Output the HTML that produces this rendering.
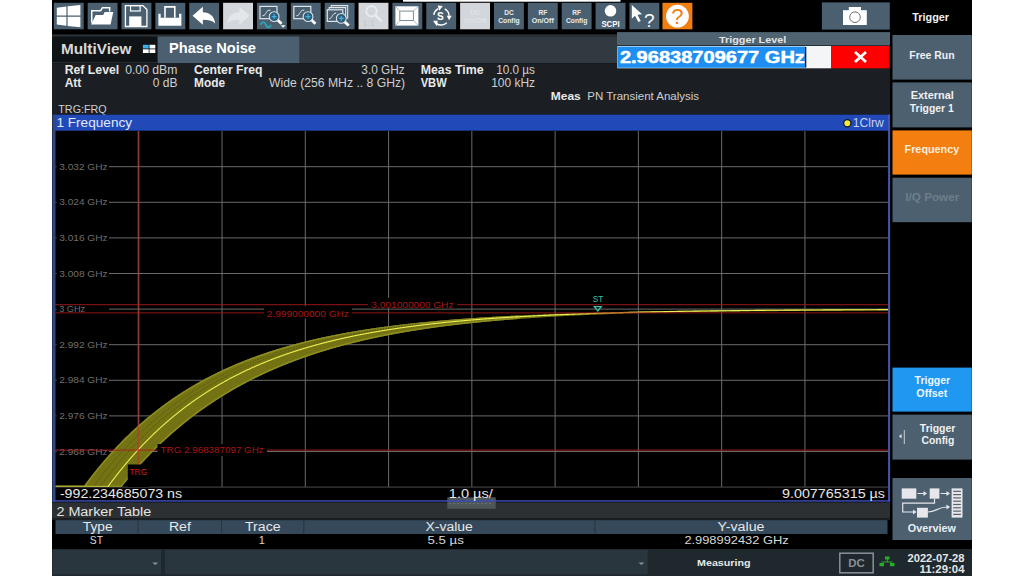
<!DOCTYPE html>
<html><head><meta charset="utf-8"><style>
html,body{margin:0;padding:0;width:1024px;height:576px;overflow:hidden;background:#fff}
svg{display:block;font-family:"Liberation Sans",sans-serif}
</style></head><body>
<svg width="1024" height="576" viewBox="0 0 1024 576">
<rect x="0.00" y="0.00" width="1024.00" height="576.00" fill="#ffffff" />
<rect x="52.00" y="0.00" width="920.00" height="576.00" fill="#000000" />
<rect x="403.00" y="0.00" width="217.50" height="1.70" fill="#ffffff" />
<rect x="53.80" y="2.80" width="29.90" height="26.50" fill="#4a5f70" />
<rect x="87.66" y="2.80" width="29.90" height="26.50" fill="#4a5f70" />
<rect x="121.52" y="2.80" width="29.90" height="26.50" fill="#4a5f70" />
<rect x="155.38" y="2.80" width="29.90" height="26.50" fill="#4a5f70" />
<rect x="189.24" y="2.80" width="29.90" height="26.50" fill="#4a5f70" />
<rect x="223.10" y="2.80" width="29.90" height="26.50" fill="#d3d6db" />
<rect x="256.96" y="2.80" width="29.90" height="26.50" fill="#4a5f70" />
<rect x="290.82" y="2.80" width="29.90" height="26.50" fill="#4a5f70" />
<rect x="324.68" y="2.80" width="29.90" height="26.50" fill="#4a5f70" />
<rect x="358.54" y="2.80" width="29.90" height="26.50" fill="#d3d6db" />
<rect x="392.40" y="2.80" width="29.90" height="26.50" fill="#4a5f70" />
<rect x="426.26" y="2.80" width="29.90" height="26.50" fill="#4a5f70" />
<rect x="460.12" y="2.80" width="29.90" height="26.50" fill="#d3d6db" />
<rect x="493.98" y="2.80" width="29.90" height="26.50" fill="#4a5f70" />
<rect x="527.84" y="2.80" width="29.90" height="26.50" fill="#4a5f70" />
<rect x="561.70" y="2.80" width="29.90" height="26.50" fill="#4a5f70" />
<rect x="595.56" y="2.80" width="29.90" height="26.50" fill="#4a5f70" />
<rect x="629.42" y="2.80" width="29.90" height="26.50" fill="#4a5f70" />
<rect x="662.48" y="2.80" width="29.90" height="26.50" fill="#f07f10" />
<rect x="821.90" y="2.40" width="67.90" height="27.20" fill="#4a5f70" />
<g transform="translate(53.80,2.8)" fill="#ffffff"><polygon points="3,4.9 12.6,3.7 12.6,12.8 3,12.8"/><polygon points="13.8,3.5 26.6,2.3 26.6,12.8 13.8,12.8"/><polygon points="3,13.9 12.6,13.9 12.6,23 3,21.8"/><polygon points="13.8,13.9 26.6,13.9 26.6,24.4 13.8,23.2"/></g>
<g transform="translate(87.66,2.8)"><polyline points="4.1,20 4.1,7.9 13,7.9 14.8,4.9 22,4.9 22,8.6" fill="none" stroke="#fff" stroke-width="1.5"/><polygon points="3.4,21.6 8,12.3 15.5,12.3 17,9.2 25.6,9.2 22.9,21.6" fill="#fff"/></g>
<g transform="translate(121.52,2.8)"><path d="M3.9,2.8 H21.3 L25.4,6.8 V23.7 H3.9 Z" fill="none" stroke="#fff" stroke-width="1.3"/><rect x="9" y="2.8" width="9.6" height="5.4" fill="none" stroke="#fff" stroke-width="1.2"/><rect x="7.7" y="13.6" width="12.2" height="9.6" fill="#fff"/></g>
<g transform="translate(155.38,2.8)"><polygon points="3,11 5.3,11 5.3,15 23.7,15 23.7,11 26,11 26,22.9 3,22.9" fill="#fff"/><polyline points="9.6,15 9.6,4.1 19.4,4.1 19.4,15" fill="none" stroke="#fff" stroke-width="1.6"/></g>
<g transform="translate(189.24,2.8)"><path d="M3.3,13 L13.6,4 V9.4 C20.5,9.4 25.2,13.5 25.9,20.6 C23,17.6 19,16.9 13.6,16.9 V21.9 Z" fill="#fff"/></g>
<g transform="translate(223.10,2.8)"><path d="M26.6,13 L16.3,4 V9.4 C9.4,9.4 4.7,13.5 4,20.6 C6.9,17.6 10.9,16.9 16.3,16.9 V21.9 Z" fill="#e3e6ea"/></g>
<g transform="translate(256.96,2.8)"><rect x="3" y="3.6" width="17" height="12.3" fill="none" stroke="#dfe6ea" stroke-width="1.2"/><path d="M5.5,13 C8,13 8.5,11 9.5,9.5 C10.5,8 11,7.3 13.5,7.3" fill="none" stroke="#dfe6ea" stroke-width="1"/><line x1="20.2" y1="16.8" x2="24.6" y2="21.0" stroke="#fff" stroke-width="2.8"/><circle cx="17.2" cy="13.8" r="4.9" fill="#2f5c78" stroke="#d8e4ea" stroke-width="1.1"/><path d="M14.7,13.8 H19.7 M17.2,11.3 V16.3" stroke="#3fb2e0" stroke-width="1.2"/><path d="M3.5,22 C5.5,18.5 7.5,18.5 9,22 C10.5,25.5 12.5,25.5 14,22" fill="none" stroke="#2aa7b0" stroke-width="1.8"/><polygon points="23.8,22.5 28.6,22.5 26.2,25" fill="#fff"/></g>
<g transform="translate(290.82,2.8)"><rect x="3" y="3.6" width="17" height="12.3" fill="none" stroke="#dfe6ea" stroke-width="1.2"/><path d="M5.5,13 C8,13 8.5,11 9.5,9.5 C10.5,8 11,7.3 13.5,7.3" fill="none" stroke="#dfe6ea" stroke-width="1"/><line x1="20.2" y1="16.8" x2="24.6" y2="21.0" stroke="#fff" stroke-width="2.8"/><circle cx="17.2" cy="13.8" r="4.9" fill="#2f5c78" stroke="#d8e4ea" stroke-width="1.1"/><path d="M14.7,13.8 H19.7 M17.2,11.3 V16.3" stroke="#3fb2e0" stroke-width="1.2"/></g>
<g transform="translate(324.68,2.8)"><path d="M6.5,5 V2.8 H23 V16" fill="none" stroke="#dfe6ea" stroke-width="1.1"/><path d="M4.5,7 V4.8 H21 V16" fill="none" stroke="#dfe6ea" stroke-width="1.1"/><rect x="2.6" y="7" width="15.5" height="11.6" fill="none" stroke="#dfe6ea" stroke-width="1.2"/><path d="M4.5,16 C6.5,16 7,14 8,12.5 C9,11 9.5,10.3 11.5,10.3" fill="none" stroke="#dfe6ea" stroke-width="1"/><line x1="19.6" y1="18.6" x2="24.0" y2="22.8" stroke="#fff" stroke-width="2.8"/><circle cx="16.6" cy="15.6" r="4.9" fill="#2f5c78" stroke="#d8e4ea" stroke-width="1.1"/><path d="M14.100000000000001,15.6 H19.1 M16.6,13.1 V18.1" stroke="#3fb2e0" stroke-width="1.2"/></g>
<g transform="translate(358.54,2.8)" fill="none" stroke="#e8ebef"><circle cx="13" cy="8.4" r="5.2" stroke-width="1.8"/><line x1="17" y1="12.6" x2="23.2" y2="18.6" stroke-width="2.6"/><text x="4.3" y="23" font-size="8.5" fill="#c2c6cb" stroke="none">1:1</text></g>
<g transform="translate(392.40,2.8)"><rect x="3" y="3.5" width="23" height="19.3" fill="#fff"/><rect x="7.4" y="8.3" width="13.6" height="9.4" fill="#fff" stroke="#7f8a92" stroke-width="1"/><path d="M3.5,4 L7.4,8.3 M25.5,4 L21,8.3 M3.5,22.3 L7.4,17.7 M25.5,22.3 L21,17.7" stroke="#a0a8ae" stroke-width="0.8"/></g>
<g transform="translate(426.26,2.8)" fill="none" stroke="#fff" stroke-width="1.5"><path d="M7.5,12 A8,8 0 0 1 12,6"/><path d="M18.5,6 A8,8 0 0 1 22.8,13"/><path d="M20.5,20 A8,8 0 0 1 10,20.5"/><polygon points="11.4,2.8 16.6,3.2 13,8" fill="#fff" stroke="none"/><polygon points="20.5,13 25.5,13 22.8,17.5" fill="#fff" stroke="none"/><polygon points="6.8,18 11.5,18 10.5,23.5" fill="#fff" stroke="none"/><text x="14" y="17.2" font-size="10" font-weight="bold" fill="#fff" stroke="none" text-anchor="middle">S</text></g>
<text x="475.07" y="14.80" font-size="6.6" fill="#e0e3e7" font-weight="bold" text-anchor="middle" >DC</text>
<text x="475.07" y="22.90" font-size="7.2" fill="#e0e3e7" font-weight="bold" text-anchor="middle" textLength="22.0" lengthAdjust="spacingAndGlyphs" >On/Off</text>
<text x="508.93" y="14.80" font-size="6.6" fill="#e8ecef" font-weight="bold" text-anchor="middle" >DC</text>
<text x="508.93" y="22.90" font-size="7.2" fill="#e8ecef" font-weight="bold" text-anchor="middle" textLength="21.5" lengthAdjust="spacingAndGlyphs" >Config</text>
<text x="542.79" y="14.80" font-size="6.6" fill="#e8ecef" font-weight="bold" text-anchor="middle" >RF</text>
<text x="542.79" y="22.90" font-size="7.2" fill="#e8ecef" font-weight="bold" text-anchor="middle" textLength="22.0" lengthAdjust="spacingAndGlyphs" >On/Off</text>
<text x="576.65" y="14.80" font-size="6.6" fill="#e8ecef" font-weight="bold" text-anchor="middle" >RF</text>
<text x="576.65" y="22.90" font-size="7.2" fill="#e8ecef" font-weight="bold" text-anchor="middle" textLength="21.5" lengthAdjust="spacingAndGlyphs" >Config</text>
<circle cx="610.51" cy="10.8" r="5.8" fill="#fff"/>
<text x="610.51" y="27.00" font-size="8.6" fill="#fff" font-weight="bold" text-anchor="middle" textLength="18.2" lengthAdjust="spacingAndGlyphs" >SCPI</text>
<g transform="translate(629.42,2.8)"><path d="M2.4,2.2 L2.4,16 L5.6,13 L8.9,19.3 L11.3,18.1 L8.1,11.9 L12.6,11.5 Z" fill="#fff"/><text x="20" y="24.6" font-size="19" fill="#fff" text-anchor="middle">?</text></g>
<circle cx="677.43" cy="16.2" r="11.4" fill="#fff"/>
<text x="677.43" y="24.20" font-size="22" fill="#f07f10" text-anchor="middle" >?</text>
<g transform="translate(843,7)"><rect x="0" y="3.2" width="23.8" height="14.8" fill="#fff"/><rect x="5.8" y="0" width="12.2" height="4" fill="#fff"/><circle cx="12" cy="10.2" r="5.3" fill="none" stroke="#6b6f72" stroke-width="1"/></g>
<rect x="52.00" y="34.40" width="838.00" height="1.90" fill="#2c3134" />
<rect x="52.00" y="36.30" width="838.00" height="27.00" fill="#313a40" />
<rect x="52.00" y="36.70" width="105.20" height="25.60" fill="#0f1316" />
<rect x="158.00" y="36.50" width="141.20" height="26.90" fill="#4b5f70" />
<text x="61.00" y="53.60" font-size="14" fill="#d9d9d9" font-weight="bold" textLength="70.3" lengthAdjust="spacingAndGlyphs" >MultiView</text>
<g fill="#fff"><rect x="142.9" y="44.8" width="5.8" height="3.7" fill="#3ab0e8"/><rect x="149.5" y="44.8" width="5.8" height="3.7"/><rect x="142.9" y="49.3" width="5.8" height="3.7"/><rect x="149.5" y="49.3" width="5.8" height="3.7"/></g>
<text x="169.00" y="53.40" font-size="14" fill="#ffffff" font-weight="bold" textLength="87.0" lengthAdjust="spacingAndGlyphs" >Phase Noise</text>
<rect x="52.00" y="63.20" width="838.00" height="51.40" fill="#1b1f23" />
<text x="64.70" y="74.30" font-size="12" fill="#e8e8e8" font-weight="bold" textLength="54.5" lengthAdjust="spacingAndGlyphs" >Ref Level</text>
<text x="177.40" y="74.30" font-size="12" fill="#cfcfcf" text-anchor="end" textLength="52.2" lengthAdjust="spacingAndGlyphs" >0.00 dBm</text>
<text x="64.70" y="86.60" font-size="12" fill="#e8e8e8" font-weight="bold" >Att</text>
<text x="177.40" y="86.60" font-size="12" fill="#cfcfcf" text-anchor="end" >0 dB</text>
<text x="194.00" y="74.30" font-size="12" fill="#e8e8e8" font-weight="bold" textLength="68.5" lengthAdjust="spacingAndGlyphs" >Center Freq</text>
<text x="404.70" y="74.30" font-size="12" fill="#cfcfcf" text-anchor="end" textLength="43.4" lengthAdjust="spacingAndGlyphs" >3.0 GHz</text>
<text x="194.00" y="86.60" font-size="12" fill="#e8e8e8" font-weight="bold" textLength="31.0" lengthAdjust="spacingAndGlyphs" >Mode</text>
<text x="405.10" y="86.60" font-size="12" fill="#cfcfcf" text-anchor="end" textLength="136.0" lengthAdjust="spacingAndGlyphs" >Wide (256 MHz .. 8 GHz)</text>
<text x="420.70" y="74.30" font-size="12" fill="#e8e8e8" font-weight="bold" textLength="62.9" lengthAdjust="spacingAndGlyphs" >Meas Time</text>
<text x="535.00" y="74.30" font-size="12" fill="#cfcfcf" text-anchor="end" textLength="38.8" lengthAdjust="spacingAndGlyphs" >10.0 µs</text>
<text x="420.70" y="86.60" font-size="12" fill="#e8e8e8" font-weight="bold" textLength="26.0" lengthAdjust="spacingAndGlyphs" >VBW</text>
<text x="535.00" y="86.60" font-size="12" fill="#cfcfcf" text-anchor="end" textLength="43.8" lengthAdjust="spacingAndGlyphs" >100 kHz</text>
<text x="550.80" y="99.60" font-size="11" fill="#e8e8e8" font-weight="bold" textLength="30.0" lengthAdjust="spacingAndGlyphs" >Meas</text>
<text x="587.30" y="99.60" font-size="11" fill="#cfcfcf" textLength="111.8" lengthAdjust="spacingAndGlyphs" >PN Transient Analysis</text>
<text x="58.30" y="113.10" font-size="11" fill="#cfcfcf" textLength="48.4" lengthAdjust="spacingAndGlyphs" >TRG:FRQ</text>
<rect x="617.00" y="32.10" width="273.00" height="13.30" fill="#4f6371" />
<text x="752.60" y="42.70" font-size="9.6" fill="#e4e4e4" font-weight="bold" text-anchor="middle" textLength="67.2" lengthAdjust="spacingAndGlyphs" >Trigger Level</text>
<rect x="617.00" y="45.40" width="273.00" height="23.30" fill="#1b1f23" />
<rect x="617.40" y="46.00" width="214.00" height="22.30" fill="#f3f5f7" />
<rect x="618.00" y="46.60" width="187.40" height="21.20" fill="#1e8ff0" />
<text x="619.90" y="63.40" font-size="16.3" fill="#ffffff" font-weight="bold" textLength="185.0" lengthAdjust="spacingAndGlyphs" stroke="#fff" stroke-width="0.45">2.96838709677 GHz</text>
<rect x="831.00" y="46.00" width="58.50" height="22.30" fill="#ff0000" />
<path d="M855,52 L866,62 M866,52 L855,62" stroke="#fff" stroke-width="2.8"/>
<rect x="805.00" y="47.00" width="1.30" height="20.50" fill="#10141a" />
<rect x="53.50" y="114.60" width="836.50" height="16.10" fill="#2149b7" />
<text x="56.40" y="127.30" font-size="12" fill="#e2e9fb" textLength="75.7" lengthAdjust="spacingAndGlyphs" >1 Frequency</text>
<circle cx="847.3" cy="123.3" r="3.6" fill="#f0f030" stroke="#10103a" stroke-width="1.2"/>
<text x="852.80" y="127.20" font-size="12" fill="#c3d3f0" textLength="31.0" lengthAdjust="spacingAndGlyphs" >1Clrw</text>
<rect x="52.30" y="114.60" width="3.20" height="387.00" fill="#33477f" />
<rect x="888.10" y="114.60" width="2.00" height="387.00" fill="#4558b0" />
<rect x="52.30" y="500.20" width="837.80" height="1.50" fill="#3a4cb4" />
<line x1="138.77" y1="131.1" x2="138.77" y2="487.1" stroke="#6a6a6a" stroke-width="1"/>
<line x1="222.04" y1="131.1" x2="222.04" y2="487.1" stroke="#6a6a6a" stroke-width="1"/>
<line x1="305.31" y1="131.1" x2="305.31" y2="487.1" stroke="#6a6a6a" stroke-width="1"/>
<line x1="388.58" y1="131.1" x2="388.58" y2="487.1" stroke="#6a6a6a" stroke-width="1"/>
<line x1="471.85" y1="131.1" x2="471.85" y2="487.1" stroke="#6a6a6a" stroke-width="1"/>
<line x1="555.12" y1="131.1" x2="555.12" y2="487.1" stroke="#6a6a6a" stroke-width="1"/>
<line x1="638.39" y1="131.1" x2="638.39" y2="487.1" stroke="#6a6a6a" stroke-width="1"/>
<line x1="721.66" y1="131.1" x2="721.66" y2="487.1" stroke="#6a6a6a" stroke-width="1"/>
<line x1="804.93" y1="131.1" x2="804.93" y2="487.1" stroke="#6a6a6a" stroke-width="1"/>
<line x1="55.5" y1="166.70" x2="888.2" y2="166.70" stroke="#6a6a6a" stroke-width="1"/>
<line x1="55.5" y1="202.30" x2="888.2" y2="202.30" stroke="#6a6a6a" stroke-width="1"/>
<line x1="55.5" y1="237.90" x2="888.2" y2="237.90" stroke="#6a6a6a" stroke-width="1"/>
<line x1="55.5" y1="273.50" x2="888.2" y2="273.50" stroke="#6a6a6a" stroke-width="1"/>
<line x1="55.5" y1="309.10" x2="888.2" y2="309.10" stroke="#6a6a6a" stroke-width="1"/>
<line x1="55.5" y1="344.70" x2="888.2" y2="344.70" stroke="#6a6a6a" stroke-width="1"/>
<line x1="55.5" y1="380.30" x2="888.2" y2="380.30" stroke="#6a6a6a" stroke-width="1"/>
<line x1="55.5" y1="415.90" x2="888.2" y2="415.90" stroke="#6a6a6a" stroke-width="1"/>
<line x1="55.5" y1="451.50" x2="888.2" y2="451.50" stroke="#6a6a6a" stroke-width="1"/>
<line x1="55.5" y1="487.10" x2="888.2" y2="487.10" stroke="#4a4a4a" stroke-width="1"/>
<rect x="56.50" y="161.70" width="52.50" height="10.00" fill="#000" />
<rect x="56.50" y="197.30" width="52.50" height="10.00" fill="#000" />
<rect x="56.50" y="232.90" width="52.50" height="10.00" fill="#000" />
<rect x="56.50" y="268.50" width="52.50" height="10.00" fill="#000" />
<rect x="56.50" y="304.10" width="52.50" height="10.00" fill="#000" />
<rect x="56.50" y="339.70" width="52.50" height="10.00" fill="#000" />
<rect x="56.50" y="375.30" width="52.50" height="10.00" fill="#000" />
<rect x="56.50" y="410.90" width="52.50" height="10.00" fill="#000" />
<rect x="56.50" y="446.50" width="52.50" height="10.00" fill="#000" />
<text x="59.20" y="169.80" font-size="9" fill="#6e6e6e" textLength="48.4" lengthAdjust="spacingAndGlyphs" >3.032 GHz</text>
<text x="59.20" y="205.40" font-size="9" fill="#6e6e6e" textLength="48.4" lengthAdjust="spacingAndGlyphs" >3.024 GHz</text>
<text x="59.20" y="241.00" font-size="9" fill="#6e6e6e" textLength="48.4" lengthAdjust="spacingAndGlyphs" >3.016 GHz</text>
<text x="59.20" y="276.60" font-size="9" fill="#6e6e6e" textLength="48.4" lengthAdjust="spacingAndGlyphs" >3.008 GHz</text>
<text x="59.20" y="312.20" font-size="9" fill="#6e6e6e" textLength="26.0" lengthAdjust="spacingAndGlyphs" >3 GHz</text>
<text x="59.20" y="347.80" font-size="9" fill="#6e6e6e" textLength="48.4" lengthAdjust="spacingAndGlyphs" >2.992 GHz</text>
<text x="59.20" y="383.40" font-size="9" fill="#6e6e6e" textLength="48.4" lengthAdjust="spacingAndGlyphs" >2.984 GHz</text>
<text x="59.20" y="419.00" font-size="9" fill="#6e6e6e" textLength="48.4" lengthAdjust="spacingAndGlyphs" >2.976 GHz</text>
<text x="59.20" y="454.60" font-size="9" fill="#6e6e6e" textLength="48.4" lengthAdjust="spacingAndGlyphs" >2.968 GHz</text>
<defs><clipPath id="gc"><rect x="55.5" y="131.1" width="832.7" height="356"/></clipPath></defs>
<g clip-path="url(#gc)">
<polygon points="55.5,487.10 56.0,487.10 56.5,487.10 57.0,487.10 57.5,487.10 58.0,487.10 58.5,487.10 59.0,487.10 59.5,487.10 60.0,487.10 60.5,487.10 61.0,487.10 61.5,487.10 62.0,487.10 62.5,487.10 63.0,487.10 63.5,487.10 64.0,487.10 64.5,487.10 65.0,487.10 65.5,487.10 66.0,487.10 66.5,487.10 67.0,487.10 67.5,487.10 68.0,487.10 68.5,487.10 69.0,487.10 69.5,487.10 70.0,487.10 70.5,487.10 71.0,487.10 71.5,487.10 72.0,487.10 72.5,487.10 73.0,487.10 73.5,487.10 74.0,487.10 74.5,487.10 75.0,487.10 75.5,487.10 76.0,487.10 76.5,487.10 77.0,487.10 77.5,487.10 78.0,487.10 78.5,487.10 79.0,487.10 79.5,487.10 80.0,487.10 80.5,487.10 81.0,487.10 81.5,487.10 82.0,487.10 82.5,487.10 83.0,487.10 83.5,486.93 84.0,486.24 84.5,485.56 85.0,484.89 85.5,484.21 86.0,483.54 86.5,482.87 87.0,482.20 87.5,481.54 88.0,480.88 88.5,480.22 89.0,479.56 89.5,478.91 90.0,478.26 90.5,477.61 91.0,476.96 91.5,476.32 92.0,475.68 92.5,475.04 93.0,474.40 93.5,473.77 94.0,473.14 94.5,472.51 95.0,471.88 95.5,471.25 96.0,470.63 96.5,470.01 97.0,469.40 97.5,468.78 98.0,468.17 98.5,467.56 99.0,466.95 99.5,466.34 100.0,465.74 100.5,465.14 101.0,464.54 101.5,463.95 102.0,463.35 102.5,462.76 103.0,462.17 103.5,461.58 104.0,461.00 104.5,460.42 105.0,459.83 105.5,459.26 106.0,458.68 106.5,458.11 107.0,457.53 107.5,456.97 108.0,456.40 108.5,455.83 109.0,455.27 109.5,454.71 110.0,454.15 110.5,453.59 111.0,453.04 111.5,452.49 112.0,451.94 112.5,451.39 113.0,450.84 113.5,450.30 114.0,449.76 114.5,449.22 115.0,448.68 115.5,448.15 116.0,447.61 116.5,447.08 117.0,446.55 117.5,446.03 118.0,445.50 118.5,444.98 119.0,444.46 119.5,443.94 120.0,443.42 120.5,442.90 121.0,442.39 121.5,441.88 122.0,441.37 122.5,440.86 123.0,440.36 123.5,439.85 124.0,439.35 124.5,438.85 125.0,438.35 125.5,437.86 126.0,437.37 126.5,436.87 127.0,436.38 127.5,435.89 128.0,435.41 128.5,434.92 129.0,434.44 129.5,433.96 130.0,433.48 130.5,433.00 131.0,432.53 131.5,432.06 132.0,431.58 132.5,431.11 133.0,430.65 133.5,430.18 134.0,429.72 134.5,429.25 135.0,428.79 135.5,428.33 136.0,427.88 136.5,427.42 137.0,426.97 137.5,426.51 138.0,426.06 138.5,425.62 139.0,425.17 139.5,424.72 140.0,424.28 140.5,423.84 141.0,423.40 141.5,422.96 142.0,422.52 142.5,422.09 143.0,421.65 143.5,421.22 144.0,420.79 144.5,420.36 145.0,419.94 145.5,419.51 146.0,419.09 146.5,418.67 147.0,418.25 147.5,417.83 148.0,417.41 148.5,417.00 149.0,416.58 149.5,416.17 150.0,415.76 150.5,415.35 151.0,414.94 151.5,414.54 152.0,414.13 152.5,413.73 153.0,413.33 153.5,412.93 154.0,412.53 154.5,412.13 155.0,411.74 155.5,411.35 156.0,410.95 156.5,410.56 157.0,410.17 157.5,409.79 158.0,409.40 158.5,409.02 159.0,408.63 159.5,408.25 160.0,407.87 160.5,407.49 161.0,407.11 161.5,406.74 162.0,406.36 162.5,405.99 163.0,405.62 163.5,405.25 164.0,404.88 164.5,404.51 165.0,404.15 165.5,403.78 166.0,403.42 166.5,403.06 167.0,402.70 167.5,402.34 168.0,401.98 168.5,401.62 169.0,401.27 169.5,400.92 170.0,400.56 170.5,400.21 171.0,399.86 171.5,399.52 172.0,399.17 172.5,398.82 173.0,398.48 173.5,398.14 174.0,397.80 174.5,397.46 175.0,397.12 175.5,396.78 176.0,396.44 176.5,396.11 177.0,395.77 177.5,395.44 178.0,395.11 178.5,394.78 179.0,394.45 179.5,394.13 180.0,393.80 180.5,393.48 181.0,393.15 181.5,392.83 182.0,392.51 182.5,392.19 183.0,391.87 183.5,391.55 184.0,391.24 184.5,390.92 185.0,390.61 185.5,390.30 186.0,389.98 186.5,389.67 187.0,389.37 187.5,389.06 188.0,388.75 188.5,388.45 189.0,388.14 189.5,387.84 190.0,387.54 190.5,387.24 191.0,386.94 191.5,386.64 192.0,386.34 192.5,386.04 193.0,385.75 193.5,385.46 194.0,385.16 194.5,384.87 195.0,384.58 195.5,384.29 196.0,384.00 196.5,383.72 197.0,383.43 197.5,383.14 198.0,382.86 198.5,382.58 199.0,382.30 199.5,382.02 200.0,381.74 200.5,381.46 201.0,381.18 201.5,380.90 202.0,380.63 202.5,380.35 203.0,380.08 203.5,379.81 204.0,379.54 204.5,379.27 205.0,379.00 205.5,378.73 206.0,378.46 206.5,378.20 207.0,377.93 207.5,377.67 208.0,377.41 208.5,377.15 209.0,376.88 209.5,376.62 210.0,376.37 210.5,376.11 211.0,375.85 211.5,375.60 212.0,375.34 212.5,375.09 213.0,374.83 213.5,374.58 214.0,374.33 214.5,374.08 215.0,373.83 215.5,373.58 216.0,373.34 216.5,373.09 217.0,372.84 217.5,372.60 218.0,372.36 218.5,372.11 219.0,371.87 219.5,371.63 220.0,371.39 220.5,371.15 221.0,370.92 221.5,370.68 222.0,370.44 222.5,370.21 223.0,369.97 223.5,369.74 224.0,369.51 224.5,369.28 225.0,369.05 225.5,368.82 226.0,368.59 226.5,368.36 227.0,368.13 227.5,367.91 228.0,367.68 228.5,367.46 229.0,367.23 229.5,367.01 230.0,366.79 230.5,366.57 231.0,366.35 231.5,366.13 232.0,365.91 232.5,365.69 233.0,365.47 233.5,365.26 234.0,365.04 234.5,364.83 235.0,364.62 235.5,364.40 236.0,364.19 236.5,363.98 237.0,363.77 237.5,363.56 238.0,363.35 238.5,363.14 239.0,362.94 239.5,362.73 240.0,362.52 240.5,362.32 241.0,362.12 241.5,361.91 242.0,361.71 242.5,361.51 243.0,361.31 243.5,361.11 244.0,360.91 244.5,360.71 245.0,360.51 245.5,360.32 246.0,360.12 246.5,359.92 247.0,359.73 247.5,359.54 248.0,359.34 248.5,359.15 249.0,358.96 249.5,358.77 250.0,358.58 250.5,358.39 251.0,358.20 251.5,358.01 252.0,357.82 252.5,357.64 253.0,357.45 253.5,357.26 254.0,357.08 254.5,356.90 255.0,356.71 255.5,356.53 256.0,356.35 256.5,356.17 257.0,355.99 257.5,355.81 258.0,355.63 258.5,355.45 259.0,355.27 259.5,355.10 260.0,354.92 260.5,354.75 261.0,354.57 261.5,354.40 262.0,354.22 262.5,354.05 263.0,353.88 263.5,353.71 264.0,353.54 264.5,353.37 265.0,353.20 265.5,353.03 266.0,352.86 266.5,352.69 267.0,352.52 267.5,352.36 268.0,352.19 268.5,352.03 269.0,351.86 269.5,351.70 270.0,351.54 270.5,351.37 271.0,351.21 271.5,351.05 272.0,350.89 272.5,350.73 273.0,350.57 273.5,350.41 274.0,350.25 274.5,350.10 275.0,349.94 275.5,349.78 276.0,349.63 276.5,349.47 277.0,349.32 277.5,349.16 278.0,349.01 278.5,348.86 279.0,348.70 279.5,348.55 280.0,348.40 280.5,348.25 281.0,348.10 281.5,347.95 282.0,347.80 282.5,347.65 283.0,347.51 283.5,347.36 284.0,347.21 284.5,347.07 285.0,346.92 285.5,346.78 286.0,346.63 286.5,346.49 287.0,346.35 287.5,346.20 288.0,346.06 288.5,345.92 289.0,345.78 289.5,345.64 290.0,345.50 290.5,345.36 291.0,345.22 291.5,345.08 292.0,344.94 292.5,344.81 293.0,344.67 293.5,344.53 294.0,344.40 294.5,344.26 295.0,344.13 295.5,343.99 296.0,343.86 296.5,343.73 297.0,343.60 297.5,343.46 298.0,343.33 298.5,343.20 299.0,343.07 299.5,342.94 300.0,342.81 300.5,342.68 301.0,342.55 301.5,342.43 302.0,342.30 302.5,342.17 303.0,342.04 303.5,341.92 304.0,341.79 304.5,341.67 305.0,341.54 305.5,341.42 306.0,341.30 306.5,341.17 307.0,341.05 307.5,340.93 308.0,340.81 308.5,340.68 309.0,340.56 309.5,340.44 310.0,340.32 310.5,340.20 311.0,340.08 311.5,339.97 312.0,339.85 312.5,339.73 313.0,339.61 313.5,339.50 314.0,339.38 314.5,339.26 315.0,339.15 315.5,339.03 316.0,338.92 316.5,338.80 317.0,338.69 317.5,338.58 318.0,338.47 318.5,338.35 319.0,338.24 319.5,338.13 320.0,338.02 320.5,337.91 321.0,337.80 321.5,337.69 322.0,337.58 322.5,337.47 323.0,337.36 323.5,337.25 324.0,337.15 324.5,337.04 325.0,336.93 325.5,336.82 326.0,336.72 326.5,336.61 327.0,336.51 327.5,336.40 328.0,336.30 328.5,336.19 329.0,336.09 329.5,335.99 330.0,335.88 330.5,335.78 331.0,335.68 331.5,335.58 332.0,335.48 332.5,335.38 333.0,335.28 333.5,335.18 334.0,335.08 334.5,334.98 335.0,334.88 335.5,334.78 336.0,334.68 336.5,334.58 337.0,334.49 337.5,334.39 338.0,334.29 338.5,334.20 339.0,334.10 339.5,334.00 340.0,333.91 340.5,333.81 341.0,333.72 341.5,333.63 342.0,333.53 342.5,333.44 343.0,333.35 343.5,333.25 344.0,333.16 344.5,333.07 345.0,332.98 345.5,332.89 346.0,332.79 346.5,332.70 347.0,332.61 347.5,332.52 348.0,332.43 348.5,332.35 349.0,332.26 349.5,332.17 350.0,332.08 350.5,331.99 351.0,331.90 351.5,331.82 352.0,331.73 352.5,331.64 353.0,331.56 353.5,331.47 354.0,331.39 354.5,331.30 355.0,331.22 355.5,331.13 356.0,331.05 356.5,330.96 357.0,330.88 357.5,330.80 358.0,330.71 358.5,330.63 359.0,330.55 359.5,330.47 360.0,330.39 360.5,330.30 361.0,330.22 361.5,330.14 362.0,330.06 362.5,329.98 363.0,329.90 363.5,329.82 364.0,329.74 364.5,329.66 365.0,329.59 365.5,329.51 366.0,329.43 366.5,329.35 367.0,329.27 367.5,329.20 368.0,329.12 368.5,329.04 369.0,328.97 369.5,328.89 370.0,328.82 370.5,328.74 371.0,328.67 371.5,328.59 372.0,328.52 372.5,328.44 373.0,328.37 373.5,328.30 374.0,328.22 374.5,328.15 375.0,328.08 375.5,328.00 376.0,327.93 376.5,327.86 377.0,327.79 377.5,327.72 378.0,327.65 378.5,327.58 379.0,327.50 379.5,327.43 380.0,327.36 380.5,327.29 381.0,327.23 381.5,327.16 382.0,327.09 382.5,327.02 383.0,326.95 383.5,326.88 384.0,326.81 384.5,326.75 385.0,326.68 385.5,326.61 386.0,326.55 386.5,326.48 387.0,326.41 387.5,326.35 388.0,326.28 388.5,326.21 389.0,326.15 389.5,326.08 390.0,326.02 390.5,325.96 391.0,325.89 391.5,325.83 392.0,325.76 392.5,325.70 393.0,325.64 393.5,325.57 394.0,325.51 394.5,325.45 395.0,325.39 395.5,325.32 396.0,325.26 396.5,325.20 397.0,325.14 397.5,325.08 398.0,325.02 398.5,324.96 399.0,324.89 399.5,324.83 400.0,324.77 400.5,324.71 401.0,324.66 401.5,324.60 402.0,324.54 402.5,324.48 403.0,324.42 403.5,324.36 404.0,324.30 404.5,324.24 405.0,324.19 405.5,324.13 406.0,324.07 406.5,324.01 407.0,323.96 407.5,323.90 408.0,323.84 408.5,323.79 409.0,323.73 409.5,323.68 410.0,323.62 410.5,323.57 411.0,323.51 411.5,323.46 412.0,323.40 412.5,323.35 413.0,323.29 413.5,323.24 414.0,323.18 414.5,323.13 415.0,323.08 415.5,323.02 416.0,322.97 416.5,322.92 417.0,322.87 417.5,322.81 418.0,322.76 418.5,322.71 419.0,322.66 419.5,322.60 420.0,322.55 420.5,322.50 421.0,322.45 421.5,322.40 422.0,322.35 422.5,322.30 423.0,322.25 423.5,322.20 424.0,322.15 424.5,322.10 425.0,322.05 425.5,322.00 426.0,321.95 426.5,321.90 427.0,321.85 427.5,321.80 428.0,321.76 428.5,321.71 429.0,321.66 429.5,321.61 430.0,321.56 430.5,321.52 431.0,321.47 431.5,321.42 432.0,321.38 432.5,321.33 433.0,321.28 433.5,321.24 434.0,321.19 434.5,321.14 435.0,321.10 435.5,321.05 436.0,321.01 436.5,320.96 437.0,320.92 437.5,320.87 438.0,320.83 438.5,320.78 439.0,320.74 439.5,320.69 440.0,320.65 440.5,320.61 441.0,320.56 441.5,320.52 442.0,320.47 442.5,320.43 443.0,320.39 443.5,320.35 444.0,320.30 444.5,320.26 445.0,320.22 445.5,320.18 446.0,320.13 446.5,320.09 447.0,320.05 447.5,320.01 448.0,319.97 448.5,319.92 449.0,319.88 449.5,319.84 450.0,319.80 450.5,319.76 451.0,319.72 451.5,319.68 452.0,319.64 452.5,319.60 453.0,319.56 453.5,319.52 454.0,319.48 454.5,319.44 455.0,319.40 455.5,319.36 456.0,319.32 456.5,319.28 457.0,319.25 457.5,319.21 458.0,319.17 458.5,319.13 459.0,319.09 459.5,319.05 460.0,319.02 460.5,318.98 461.0,318.94 461.5,318.90 462.0,318.87 462.5,318.83 463.0,318.79 463.5,318.76 464.0,318.72 464.5,318.68 465.0,318.65 465.5,318.61 466.0,318.57 466.5,318.54 467.0,318.50 467.5,318.47 468.0,318.43 468.5,318.40 469.0,318.36 469.5,318.32 470.0,318.29 470.5,318.26 471.0,318.22 471.5,318.19 472.0,318.15 472.5,318.12 473.0,318.08 473.5,318.05 474.0,318.01 474.5,317.98 475.0,317.95 475.5,317.91 476.0,317.88 476.5,317.85 477.0,317.81 477.5,317.78 478.0,317.75 478.5,317.71 479.0,317.68 479.5,317.65 480.0,317.62 480.5,317.58 481.0,317.55 481.5,317.52 482.0,317.49 482.5,317.46 483.0,317.42 483.5,317.39 484.0,317.36 484.5,317.33 485.0,317.30 485.5,317.27 486.0,317.24 486.5,317.21 487.0,317.18 487.5,317.15 488.0,317.11 488.5,317.08 489.0,317.05 489.5,317.02 490.0,316.99 490.5,316.96 491.0,316.93 491.5,316.90 492.0,316.87 492.5,316.85 493.0,316.82 493.5,316.79 494.0,316.76 494.5,316.73 495.0,316.70 495.5,316.67 496.0,316.64 496.5,316.61 497.0,316.59 497.5,316.56 498.0,316.53 498.5,316.50 499.0,316.47 499.5,316.44 500.0,316.42 500.5,316.39 501.0,316.36 501.5,316.33 502.0,316.31 502.5,316.28 503.0,316.25 503.5,316.22 504.0,316.20 504.5,316.17 505.0,316.14 505.5,316.12 506.0,316.09 506.5,316.06 507.0,316.04 507.5,316.01 508.0,315.99 508.5,315.96 509.0,315.93 509.5,315.91 510.0,315.88 510.5,315.86 511.0,315.83 511.5,315.81 512.0,315.78 512.5,315.76 513.0,315.73 513.5,315.70 514.0,315.68 514.5,315.66 515.0,315.63 515.5,315.61 516.0,315.58 516.5,315.56 517.0,315.53 517.5,315.51 518.0,315.48 518.5,315.46 519.0,315.44 519.5,315.41 520.0,315.39 520.5,315.36 521.0,315.34 521.5,315.32 522.0,315.29 522.5,315.27 523.0,315.25 523.5,315.22 524.0,315.20 524.5,315.18 525.0,315.15 525.5,315.13 526.0,315.11 526.5,315.09 527.0,315.06 527.5,315.04 528.0,315.02 528.5,315.00 529.0,314.97 529.5,314.95 530.0,314.93 530.5,314.91 531.0,314.89 531.5,314.86 532.0,314.84 532.5,314.82 533.0,314.80 533.5,314.78 534.0,314.76 534.5,314.73 535.0,314.71 535.5,314.69 536.0,314.67 536.5,314.65 537.0,314.63 537.5,314.61 538.0,314.59 538.5,314.57 539.0,314.55 539.5,314.53 540.0,314.51 540.5,314.48 541.0,314.46 541.5,314.44 542.0,314.42 542.5,314.40 543.0,314.38 543.5,314.36 544.0,314.34 544.5,314.32 545.0,314.31 545.5,314.29 546.0,314.27 546.5,314.25 547.0,314.23 547.5,314.21 548.0,314.19 548.5,314.17 549.0,314.15 549.5,314.13 550.0,314.11 550.5,314.09 551.0,314.07 551.5,314.06 552.0,314.04 552.5,314.02 553.0,314.00 553.5,313.98 554.0,313.96 554.5,313.95 555.0,313.93 555.5,313.91 556.0,313.89 556.5,313.87 557.0,313.85 557.5,313.84 558.0,313.82 558.5,313.80 559.0,313.78 559.5,313.77 560.0,313.75 560.5,313.73 561.0,313.71 561.5,313.70 562.0,313.68 562.5,313.66 563.0,313.65 563.5,313.63 564.0,313.61 564.5,313.59 565.0,313.58 565.5,313.56 566.0,313.54 566.5,313.53 567.0,313.51 567.5,313.49 568.0,313.48 568.5,313.46 569.0,313.44 569.5,313.43 570.0,313.41 570.5,313.40 571.0,313.38 571.5,313.36 572.0,313.35 572.5,313.33 573.0,313.32 573.5,313.30 574.0,313.28 574.5,313.27 575.0,313.25 575.5,313.24 576.0,313.22 576.5,313.21 577.0,313.19 577.5,313.18 578.0,313.16 578.5,313.15 579.0,313.13 579.5,313.12 580.0,313.10 580.5,313.09 581.0,313.07 581.5,313.06 582.0,313.04 582.5,313.03 583.0,313.01 583.5,313.00 584.0,312.98 584.5,312.97 585.0,312.95 585.5,312.94 586.0,312.92 586.5,312.91 587.0,312.90 587.5,312.88 588.0,312.87 588.5,312.85 589.0,312.84 589.5,312.83 590.0,312.81 590.5,312.80 591.0,312.78 591.5,312.77 592.0,312.76 592.5,312.74 593.0,312.73 593.5,312.72 594.0,312.70 594.5,312.69 595.0,312.68 595.5,312.66 596.0,312.65 596.5,312.64 597.0,312.62 597.5,312.61 598.0,312.59 598.5,312.58 599.0,312.56 599.5,312.54 600.0,312.53 600.5,312.51 601.0,312.50 601.5,312.48 602.0,312.47 602.5,312.45 603.0,312.44 603.5,312.42 604.0,312.41 604.5,312.39 605.0,312.38 605.5,312.36 606.0,312.35 606.5,312.33 607.0,312.32 607.5,312.30 608.0,312.29 608.5,312.27 609.0,312.26 609.5,312.24 610.0,312.23 610.5,312.22 611.0,312.20 611.5,312.19 612.0,312.17 612.5,312.16 613.0,312.15 613.5,312.13 614.0,312.12 614.5,312.10 615.0,312.09 615.5,312.08 616.0,312.06 616.5,312.05 617.0,312.04 617.5,312.02 618.0,312.01 618.5,311.99 619.0,311.98 619.5,311.97 620.0,311.95 620.5,311.94 621.0,311.93 621.5,311.91 622.0,311.90 622.5,311.89 623.0,311.88 623.5,311.86 624.0,311.85 624.5,311.84 625.0,311.82 625.5,311.81 626.0,311.80 626.5,311.79 627.0,311.77 627.5,311.76 628.0,311.75 628.5,311.74 629.0,311.72 629.5,311.71 630.0,311.70 630.5,311.69 631.0,311.67 631.5,311.66 632.0,311.65 632.5,311.64 633.0,311.63 633.5,311.61 634.0,311.60 634.5,311.59 635.0,311.58 635.5,311.57 636.0,311.55 636.5,311.54 637.0,311.53 637.5,311.52 638.0,311.51 638.5,311.50 639.0,311.48 639.5,311.47 640.0,311.46 640.5,311.45 641.0,311.44 641.5,311.43 642.0,311.42 642.5,311.41 643.0,311.39 643.5,311.38 644.0,311.37 644.5,311.36 645.0,311.35 645.5,311.34 646.0,311.33 646.5,311.32 647.0,311.31 647.5,311.30 648.0,311.29 648.5,311.27 649.0,311.26 649.5,311.25 650.0,311.24 650.5,311.23 651.0,311.22 651.5,311.21 652.0,311.20 652.5,311.19 653.0,311.18 653.5,311.17 654.0,311.16 654.5,311.15 655.0,311.14 655.5,311.13 656.0,311.12 656.5,311.11 657.0,311.10 657.5,311.09 658.0,311.08 658.5,311.07 659.0,311.06 659.5,311.05 660.0,311.04 660.5,311.03 661.0,311.02 661.5,311.01 662.0,311.00 662.5,310.99 663.0,310.98 663.5,310.97 664.0,310.96 664.5,310.95 665.0,310.94 665.5,310.93 666.0,310.92 666.5,310.92 667.0,310.91 667.5,310.90 668.0,310.89 668.5,310.88 669.0,310.87 669.5,310.86 670.0,310.85 670.5,310.84 671.0,310.83 671.5,310.82 672.0,310.82 672.5,310.81 673.0,310.80 673.5,310.79 674.0,310.78 674.5,310.77 675.0,310.76 675.5,310.75 676.0,310.75 676.5,310.74 677.0,310.73 677.5,310.72 678.0,310.71 678.5,310.70 679.0,310.69 679.5,310.69 680.0,310.68 680.5,310.67 681.0,310.66 681.5,310.65 682.0,310.64 682.5,310.64 683.0,310.63 683.5,310.62 684.0,310.61 684.5,310.60 685.0,310.60 685.5,310.59 686.0,310.58 686.5,310.57 687.0,310.56 687.5,310.56 688.0,310.55 688.5,310.54 689.0,310.53 689.5,310.52 690.0,310.52 690.5,310.51 691.0,310.50 691.5,310.49 692.0,310.49 692.5,310.48 693.0,310.47 693.5,310.46 694.0,310.46 694.5,310.45 695.0,310.44 695.5,310.43 696.0,310.43 696.5,310.42 697.0,310.41 697.5,310.40 698.0,310.40 698.5,310.39 699.0,310.38 699.5,310.37 700.0,310.37 700.5,310.36 701.0,310.35 701.5,310.35 702.0,310.34 702.5,310.33 703.0,310.32 703.5,310.32 704.0,310.31 704.5,310.30 705.0,310.30 705.5,310.29 706.0,310.28 706.5,310.28 707.0,310.27 707.5,310.26 708.0,310.26 708.5,310.25 709.0,310.24 709.5,310.24 710.0,310.23 710.5,310.22 711.0,310.22 711.5,310.21 712.0,310.20 712.5,310.20 713.0,310.19 713.5,310.18 714.0,310.18 714.5,310.17 715.0,310.16 715.5,310.16 716.0,310.15 716.5,310.14 717.0,310.14 717.5,310.13 718.0,310.13 718.5,310.12 719.0,310.11 719.5,310.11 720.0,310.10 720.5,310.09 721.0,310.09 721.5,310.08 722.0,310.08 722.5,310.07 723.0,310.06 723.5,310.06 724.0,310.05 724.5,310.05 725.0,310.04 725.5,310.03 726.0,310.03 726.5,310.02 727.0,310.02 727.5,310.01 728.0,310.01 728.5,310.00 729.0,309.99 729.5,309.99 730.0,309.98 730.5,309.98 731.0,309.97 731.5,309.97 732.0,309.96 732.5,309.95 733.0,309.95 733.5,309.94 734.0,309.94 734.5,309.93 735.0,309.93 735.5,309.92 736.0,309.92 736.5,309.91 737.0,309.90 737.5,309.90 738.0,309.89 738.5,309.89 739.0,309.88 739.5,309.88 740.0,309.87 740.5,309.87 741.0,309.86 741.5,309.86 742.0,309.85 742.5,309.85 743.0,309.84 743.5,309.84 744.0,309.83 744.5,309.83 745.0,309.82 745.5,309.82 746.0,309.81 746.5,309.81 747.0,309.80 747.5,309.80 748.0,309.79 748.5,309.79 749.0,309.78 749.5,309.78 750.0,309.77 750.5,309.77 751.0,309.76 751.5,309.76 752.0,309.75 752.5,309.75 753.0,309.74 753.5,309.74 754.0,309.73 754.5,309.73 755.0,309.72 755.5,309.72 756.0,309.71 756.5,309.71 757.0,309.70 757.5,309.70 758.0,309.69 758.5,309.69 759.0,309.69 759.5,309.68 760.0,309.68 760.5,309.67 761.0,309.67 761.5,309.66 762.0,309.66 762.5,309.65 763.0,309.65 763.5,309.65 764.0,309.64 764.5,309.64 765.0,309.63 765.5,309.63 766.0,309.62 766.5,309.62 767.0,309.62 767.5,309.61 768.0,309.61 768.5,309.60 769.0,309.60 769.5,309.59 770.0,309.59 770.5,309.59 771.0,309.58 771.5,309.58 772.0,309.57 772.5,309.57 773.0,309.56 773.5,309.56 774.0,309.56 774.5,309.55 775.0,309.55 775.5,309.54 776.0,309.54 776.5,309.54 777.0,309.53 777.5,309.53 778.0,309.52 778.5,309.52 779.0,309.52 779.5,309.51 780.0,309.51 780.5,309.51 781.0,309.50 781.5,309.50 782.0,309.49 782.5,309.49 783.0,309.49 783.5,309.48 784.0,309.48 784.5,309.47 785.0,309.47 785.5,309.47 786.0,309.46 786.5,309.46 787.0,309.46 787.5,309.45 788.0,309.45 788.5,309.45 789.0,309.44 789.5,309.44 790.0,309.43 790.5,309.43 791.0,309.43 791.5,309.42 792.0,309.42 792.5,309.42 793.0,309.41 793.5,309.41 794.0,309.41 794.5,309.40 795.0,309.40 795.5,309.40 796.0,309.39 796.5,309.39 797.0,309.39 797.5,309.38 798.0,309.38 798.5,309.38 799.0,309.37 799.5,309.37 800.0,309.37 800.5,309.36 801.0,309.36 801.5,309.36 802.0,309.35 802.5,309.35 803.0,309.35 803.5,309.34 804.0,309.34 804.5,309.34 805.0,309.33 805.5,309.33 806.0,309.33 806.5,309.32 807.0,309.32 807.5,309.32 808.0,309.31 808.5,309.31 809.0,309.31 809.5,309.30 810.0,309.30 810.5,309.30 811.0,309.29 811.5,309.29 812.0,309.29 812.5,309.29 813.0,309.28 813.5,309.28 814.0,309.28 814.5,309.27 815.0,309.27 815.5,309.27 816.0,309.26 816.5,309.26 817.0,309.26 817.5,309.26 818.0,309.25 818.5,309.25 819.0,309.25 819.5,309.24 820.0,309.24 820.5,309.24 821.0,309.24 821.5,309.23 822.0,309.23 822.5,309.23 823.0,309.22 823.5,309.22 824.0,309.22 824.5,309.22 825.0,309.21 825.5,309.21 826.0,309.21 826.5,309.21 827.0,309.20 827.5,309.20 828.0,309.20 828.5,309.19 829.0,309.19 829.5,309.19 830.0,309.19 830.5,309.18 831.0,309.18 831.5,309.18 832.0,309.18 832.5,309.17 833.0,309.17 833.5,309.17 834.0,309.17 834.5,309.16 835.0,309.16 835.5,309.16 836.0,309.16 836.5,309.15 837.0,309.15 837.5,309.15 838.0,309.15 838.5,309.14 839.0,309.14 839.5,309.14 840.0,309.14 840.5,309.13 841.0,309.13 841.5,309.13 842.0,309.13 842.5,309.12 843.0,309.12 843.5,309.12 844.0,309.12 844.5,309.11 845.0,309.11 845.5,309.11 846.0,309.11 846.5,309.10 847.0,309.10 847.5,309.10 848.0,309.10 848.5,309.10 849.0,309.09 849.5,309.09 850.0,309.09 850.5,309.09 851.0,309.08 851.5,309.08 852.0,309.08 852.5,309.08 853.0,309.08 853.5,309.07 854.0,309.07 854.5,309.07 855.0,309.07 855.5,309.06 856.0,309.06 856.5,309.06 857.0,309.06 857.5,309.06 858.0,309.05 858.5,309.05 859.0,309.05 859.5,309.05 860.0,309.05 860.5,309.04 861.0,309.04 861.5,309.04 862.0,309.04 862.5,309.03 863.0,309.03 863.5,309.03 864.0,309.03 864.5,309.03 865.0,309.02 865.5,309.02 866.0,309.02 866.5,309.02 867.0,309.02 867.5,309.01 868.0,309.01 868.5,309.01 869.0,309.01 869.5,309.01 870.0,309.00 870.5,309.00 871.0,309.00 871.5,309.00 872.0,309.00 872.5,309.00 873.0,308.99 873.5,308.99 874.0,308.99 874.5,308.99 875.0,308.99 875.5,308.98 876.0,308.98 876.5,308.98 877.0,308.98 877.5,308.98 878.0,308.97 878.5,308.97 879.0,308.97 879.5,308.97 880.0,308.97 880.5,308.97 881.0,308.96 881.5,308.96 882.0,308.96 882.5,308.96 883.0,308.96 883.5,308.96 884.0,308.95 884.5,308.95 885.0,308.95 885.5,308.95 886.0,308.95 886.5,308.94 887.0,308.94 887.5,308.94 888.0,308.94 888.0,310.54 887.5,310.54 887.0,310.54 886.5,310.54 886.0,310.55 885.5,310.55 885.0,310.55 884.5,310.55 884.0,310.55 883.5,310.56 883.0,310.56 882.5,310.56 882.0,310.56 881.5,310.56 881.0,310.56 880.5,310.57 880.0,310.57 879.5,310.57 879.0,310.57 878.5,310.57 878.0,310.57 877.5,310.58 877.0,310.58 876.5,310.58 876.0,310.58 875.5,310.58 875.0,310.59 874.5,310.59 874.0,310.59 873.5,310.59 873.0,310.59 872.5,310.60 872.0,310.60 871.5,310.60 871.0,310.60 870.5,310.60 870.0,310.60 869.5,310.61 869.0,310.61 868.5,310.61 868.0,310.61 867.5,310.61 867.0,310.62 866.5,310.62 866.0,310.62 865.5,310.62 865.0,310.62 864.5,310.63 864.0,310.63 863.5,310.63 863.0,310.63 862.5,310.63 862.0,310.64 861.5,310.64 861.0,310.64 860.5,310.64 860.0,310.65 859.5,310.65 859.0,310.65 858.5,310.65 858.0,310.65 857.5,310.66 857.0,310.66 856.5,310.66 856.0,310.66 855.5,310.66 855.0,310.67 854.5,310.67 854.0,310.67 853.5,310.67 853.0,310.68 852.5,310.68 852.0,310.68 851.5,310.68 851.0,310.68 850.5,310.69 850.0,310.69 849.5,310.69 849.0,310.69 848.5,310.70 848.0,310.70 847.5,310.70 847.0,310.70 846.5,310.70 846.0,310.71 845.5,310.71 845.0,310.71 844.5,310.71 844.0,310.72 843.5,310.72 843.0,310.72 842.5,310.72 842.0,310.73 841.5,310.73 841.0,310.73 840.5,310.73 840.0,310.74 839.5,310.74 839.0,310.74 838.5,310.74 838.0,310.75 837.5,310.75 837.0,310.75 836.5,310.75 836.0,310.76 835.5,310.76 835.0,310.76 834.5,310.76 834.0,310.77 833.5,310.77 833.0,310.77 832.5,310.77 832.0,310.78 831.5,310.78 831.0,310.78 830.5,310.78 830.0,310.79 829.5,310.79 829.0,310.79 828.5,310.79 828.0,310.80 827.5,310.80 827.0,310.80 826.5,310.81 826.0,310.81 825.5,310.81 825.0,310.81 824.5,310.82 824.0,310.82 823.5,310.82 823.0,310.82 822.5,310.83 822.0,310.83 821.5,310.83 821.0,310.84 820.5,310.84 820.0,310.84 819.5,310.84 819.0,310.85 818.5,310.85 818.0,310.85 817.5,310.86 817.0,310.86 816.5,310.86 816.0,310.86 815.5,310.87 815.0,310.87 814.5,310.87 814.0,310.88 813.5,310.88 813.0,310.88 812.5,310.89 812.0,310.89 811.5,310.89 811.0,310.89 810.5,310.90 810.0,310.90 809.5,310.90 809.0,310.91 808.5,310.91 808.0,310.91 807.5,310.92 807.0,310.92 806.5,310.92 806.0,310.93 805.5,310.93 805.0,310.93 804.5,310.94 804.0,310.94 803.5,310.94 803.0,310.95 802.5,310.95 802.0,310.95 801.5,310.96 801.0,310.96 800.5,310.96 800.0,310.97 799.5,310.97 799.0,310.97 798.5,310.98 798.0,310.98 797.5,310.98 797.0,310.99 796.5,310.99 796.0,310.99 795.5,311.00 795.0,311.00 794.5,311.00 794.0,311.01 793.5,311.01 793.0,311.01 792.5,311.02 792.0,311.02 791.5,311.02 791.0,311.03 790.5,311.03 790.0,311.03 789.5,311.04 789.0,311.04 788.5,311.05 788.0,311.05 787.5,311.05 787.0,311.06 786.5,311.06 786.0,311.06 785.5,311.07 785.0,311.07 784.5,311.07 784.0,311.08 783.5,311.08 783.0,311.09 782.5,311.09 782.0,311.09 781.5,311.10 781.0,311.10 780.5,311.11 780.0,311.11 779.5,311.11 779.0,311.12 778.5,311.12 778.0,311.12 777.5,311.13 777.0,311.13 776.5,311.14 776.0,311.14 775.5,311.14 775.0,311.15 774.5,311.15 774.0,311.16 773.5,311.16 773.0,311.16 772.5,311.17 772.0,311.17 771.5,311.18 771.0,311.18 770.5,311.19 770.0,311.19 769.5,311.19 769.0,311.20 768.5,311.20 768.0,311.21 767.5,311.21 767.0,311.22 766.5,311.22 766.0,311.22 765.5,311.23 765.0,311.23 764.5,311.24 764.0,311.24 763.5,311.25 763.0,311.25 762.5,311.25 762.0,311.26 761.5,311.26 761.0,311.27 760.5,311.27 760.0,311.28 759.5,311.28 759.0,311.29 758.5,311.29 758.0,311.29 757.5,311.30 757.0,311.30 756.5,311.31 756.0,311.31 755.5,311.32 755.0,311.32 754.5,311.33 754.0,311.33 753.5,311.34 753.0,311.34 752.5,311.35 752.0,311.35 751.5,311.36 751.0,311.36 750.5,311.37 750.0,311.37 749.5,311.38 749.0,311.38 748.5,311.39 748.0,311.39 747.5,311.40 747.0,311.40 746.5,311.41 746.0,311.41 745.5,311.42 745.0,311.42 744.5,311.43 744.0,311.43 743.5,311.44 743.0,311.44 742.5,311.45 742.0,311.45 741.5,311.46 741.0,311.46 740.5,311.47 740.0,311.47 739.5,311.48 739.0,311.48 738.5,311.49 738.0,311.49 737.5,311.50 737.0,311.50 736.5,311.51 736.0,311.52 735.5,311.52 735.0,311.53 734.5,311.53 734.0,311.54 733.5,311.54 733.0,311.55 732.5,311.55 732.0,311.56 731.5,311.57 731.0,311.57 730.5,311.58 730.0,311.58 729.5,311.59 729.0,311.59 728.5,311.60 728.0,311.61 727.5,311.61 727.0,311.62 726.5,311.62 726.0,311.63 725.5,311.63 725.0,311.64 724.5,311.65 724.0,311.65 723.5,311.66 723.0,311.66 722.5,311.67 722.0,311.68 721.5,311.68 721.0,311.69 720.5,311.69 720.0,311.70 719.5,311.71 719.0,311.71 718.5,311.72 718.0,311.73 717.5,311.73 717.0,311.74 716.5,311.74 716.0,311.75 715.5,311.76 715.0,311.76 714.5,311.77 714.0,311.78 713.5,311.78 713.0,311.79 712.5,311.80 712.0,311.80 711.5,311.81 711.0,311.82 710.5,311.82 710.0,311.83 709.5,311.84 709.0,311.84 708.5,311.85 708.0,311.86 707.5,311.86 707.0,311.87 706.5,311.88 706.0,311.88 705.5,311.89 705.0,311.90 704.5,311.90 704.0,311.91 703.5,311.92 703.0,311.92 702.5,311.93 702.0,311.94 701.5,311.95 701.0,311.95 700.5,311.96 700.0,311.97 699.5,311.97 699.0,311.98 698.5,311.99 698.0,312.00 697.5,312.00 697.0,312.01 696.5,312.02 696.0,312.03 695.5,312.03 695.0,312.04 694.5,312.05 694.0,312.06 693.5,312.06 693.0,312.07 692.5,312.08 692.0,312.09 691.5,312.09 691.0,312.10 690.5,312.11 690.0,312.12 689.5,312.12 689.0,312.13 688.5,312.14 688.0,312.15 687.5,312.16 687.0,312.16 686.5,312.17 686.0,312.18 685.5,312.19 685.0,312.20 684.5,312.20 684.0,312.21 683.5,312.22 683.0,312.23 682.5,312.24 682.0,312.24 681.5,312.25 681.0,312.26 680.5,312.27 680.0,312.28 679.5,312.29 679.0,312.29 678.5,312.30 678.0,312.31 677.5,312.32 677.0,312.33 676.5,312.34 676.0,312.35 675.5,312.35 675.0,312.36 674.5,312.37 674.0,312.38 673.5,312.39 673.0,312.40 672.5,312.41 672.0,312.42 671.5,312.42 671.0,312.43 670.5,312.44 670.0,312.45 669.5,312.46 669.0,312.47 668.5,312.48 668.0,312.49 667.5,312.50 667.0,312.51 666.5,312.52 666.0,312.52 665.5,312.53 665.0,312.54 664.5,312.55 664.0,312.56 663.5,312.57 663.0,312.58 662.5,312.59 662.0,312.60 661.5,312.61 661.0,312.62 660.5,312.63 660.0,312.64 659.5,312.65 659.0,312.66 658.5,312.67 658.0,312.68 657.5,312.69 657.0,312.70 656.5,312.71 656.0,312.72 655.5,312.73 655.0,312.74 654.5,312.75 654.0,312.76 653.5,312.77 653.0,312.78 652.5,312.79 652.0,312.80 651.5,312.81 651.0,312.82 650.5,312.83 650.0,312.84 649.5,312.85 649.0,312.86 648.5,312.87 648.0,312.89 647.5,312.90 647.0,312.91 646.5,312.92 646.0,312.93 645.5,312.94 645.0,312.95 644.5,312.96 644.0,312.97 643.5,312.98 643.0,312.99 642.5,313.01 642.0,313.02 641.5,313.03 641.0,313.05 640.5,313.06 640.0,313.08 639.5,313.09 639.0,313.11 638.5,313.12 638.0,313.14 637.5,313.15 637.0,313.17 636.5,313.18 636.0,313.20 635.5,313.21 635.0,313.23 634.5,313.24 634.0,313.26 633.5,313.27 633.0,313.29 632.5,313.31 632.0,313.32 631.5,313.34 631.0,313.35 630.5,313.37 630.0,313.39 629.5,313.40 629.0,313.42 628.5,313.43 628.0,313.45 627.5,313.47 627.0,313.48 626.5,313.50 626.0,313.51 625.5,313.53 625.0,313.55 624.5,313.56 624.0,313.58 623.5,313.60 623.0,313.62 622.5,313.63 622.0,313.65 621.5,313.67 621.0,313.68 620.5,313.70 620.0,313.72 619.5,313.73 619.0,313.75 618.5,313.77 618.0,313.79 617.5,313.80 617.0,313.82 616.5,313.84 616.0,313.86 615.5,313.88 615.0,313.89 614.5,313.91 614.0,313.93 613.5,313.95 613.0,313.97 612.5,313.98 612.0,314.00 611.5,314.02 611.0,314.04 610.5,314.06 610.0,314.08 609.5,314.09 609.0,314.11 608.5,314.13 608.0,314.15 607.5,314.17 607.0,314.19 606.5,314.21 606.0,314.23 605.5,314.25 605.0,314.27 604.5,314.29 604.0,314.30 603.5,314.32 603.0,314.34 602.5,314.36 602.0,314.38 601.5,314.40 601.0,314.42 600.5,314.44 600.0,314.46 599.5,314.48 599.0,314.50 598.5,314.52 598.0,314.54 597.5,314.56 597.0,314.58 596.5,314.61 596.0,314.63 595.5,314.65 595.0,314.67 594.5,314.69 594.0,314.71 593.5,314.73 593.0,314.75 592.5,314.77 592.0,314.79 591.5,314.82 591.0,314.84 590.5,314.86 590.0,314.88 589.5,314.90 589.0,314.92 588.5,314.95 588.0,314.97 587.5,314.99 587.0,315.01 586.5,315.03 586.0,315.06 585.5,315.08 585.0,315.10 584.5,315.12 584.0,315.15 583.5,315.17 583.0,315.19 582.5,315.21 582.0,315.24 581.5,315.26 581.0,315.28 580.5,315.31 580.0,315.33 579.5,315.35 579.0,315.38 578.5,315.40 578.0,315.42 577.5,315.45 577.0,315.47 576.5,315.50 576.0,315.52 575.5,315.54 575.0,315.57 574.5,315.59 574.0,315.62 573.5,315.64 573.0,315.67 572.5,315.69 572.0,315.72 571.5,315.74 571.0,315.77 570.5,315.79 570.0,315.82 569.5,315.84 569.0,315.87 568.5,315.89 568.0,315.92 567.5,315.94 567.0,315.97 566.5,315.99 566.0,316.02 565.5,316.05 565.0,316.07 564.5,316.10 564.0,316.12 563.5,316.15 563.0,316.18 562.5,316.20 562.0,316.23 561.5,316.26 561.0,316.28 560.5,316.31 560.0,316.34 559.5,316.37 559.0,316.39 558.5,316.42 558.0,316.45 557.5,316.48 557.0,316.50 556.5,316.53 556.0,316.56 555.5,316.59 555.0,316.62 554.5,316.64 554.0,316.67 553.5,316.70 553.0,316.73 552.5,316.76 552.0,316.79 551.5,316.82 551.0,316.85 550.5,316.87 550.0,316.90 549.5,316.93 549.0,316.96 548.5,316.99 548.0,317.02 547.5,317.05 547.0,317.08 546.5,317.11 546.0,317.14 545.5,317.17 545.0,317.20 544.5,317.23 544.0,317.26 543.5,317.29 543.0,317.32 542.5,317.36 542.0,317.39 541.5,317.42 541.0,317.45 540.5,317.48 540.0,317.51 539.5,317.54 539.0,317.58 538.5,317.61 538.0,317.64 537.5,317.67 537.0,317.70 536.5,317.74 536.0,317.77 535.5,317.80 535.0,317.83 534.5,317.87 534.0,317.90 533.5,317.93 533.0,317.97 532.5,318.00 532.0,318.03 531.5,318.07 531.0,318.10 530.5,318.13 530.0,318.17 529.5,318.20 529.0,318.24 528.5,318.27 528.0,318.31 527.5,318.34 527.0,318.37 526.5,318.41 526.0,318.44 525.5,318.48 525.0,318.51 524.5,318.55 524.0,318.59 523.5,318.62 523.0,318.66 522.5,318.69 522.0,318.73 521.5,318.77 521.0,318.80 520.5,318.84 520.0,318.87 519.5,318.91 519.0,318.95 518.5,318.99 518.0,319.02 517.5,319.06 517.0,319.10 516.5,319.14 516.0,319.17 515.5,319.21 515.0,319.25 514.5,319.29 514.0,319.33 513.5,319.36 513.0,319.40 512.5,319.44 512.0,319.48 511.5,319.52 511.0,319.56 510.5,319.60 510.0,319.64 509.5,319.68 509.0,319.72 508.5,319.76 508.0,319.80 507.5,319.84 507.0,319.88 506.5,319.92 506.0,319.96 505.5,320.00 505.0,320.04 504.5,320.08 504.0,320.12 503.5,320.16 503.0,320.21 502.5,320.25 502.0,320.29 501.5,320.33 501.0,320.37 500.5,320.42 500.0,320.46 499.5,320.50 499.0,320.54 498.5,320.59 498.0,320.63 497.5,320.67 497.0,320.72 496.5,320.76 496.0,320.80 495.5,320.85 495.0,320.89 494.5,320.94 494.0,320.98 493.5,321.03 493.0,321.07 492.5,321.12 492.0,321.16 491.5,321.21 491.0,321.25 490.5,321.30 490.0,321.34 489.5,321.39 489.0,321.43 488.5,321.48 488.0,321.53 487.5,321.57 487.0,321.62 486.5,321.67 486.0,321.72 485.5,321.76 485.0,321.81 484.5,321.86 484.0,321.91 483.5,321.95 483.0,322.00 482.5,322.05 482.0,322.10 481.5,322.15 481.0,322.20 480.5,322.25 480.0,322.30 479.5,322.34 479.0,322.39 478.5,322.44 478.0,322.49 477.5,322.54 477.0,322.60 476.5,322.65 476.0,322.70 475.5,322.75 475.0,322.80 474.5,322.85 474.0,322.90 473.5,322.95 473.0,323.01 472.5,323.06 472.0,323.11 471.5,323.16 471.0,323.22 470.5,323.27 470.0,323.32 469.5,323.37 469.0,323.43 468.5,323.48 468.0,323.54 467.5,323.59 467.0,323.64 466.5,323.70 466.0,323.75 465.5,323.81 465.0,323.86 464.5,323.92 464.0,323.97 463.5,324.03 463.0,324.09 462.5,324.14 462.0,324.20 461.5,324.26 461.0,324.31 460.5,324.37 460.0,324.43 459.5,324.48 459.0,324.54 458.5,324.60 458.0,324.66 457.5,324.72 457.0,324.77 456.5,324.83 456.0,324.89 455.5,324.95 455.0,325.01 454.5,325.07 454.0,325.13 453.5,325.19 453.0,325.25 452.5,325.31 452.0,325.37 451.5,325.43 451.0,325.49 450.5,325.55 450.0,325.62 449.5,325.68 449.0,325.74 448.5,325.80 448.0,325.86 447.5,325.93 447.0,325.99 446.5,326.05 446.0,326.12 445.5,326.18 445.0,326.24 444.5,326.31 444.0,326.37 443.5,326.44 443.0,326.50 442.5,326.57 442.0,326.63 441.5,326.70 441.0,326.76 440.5,326.83 440.0,326.90 439.5,326.96 439.0,327.03 438.5,327.10 438.0,327.16 437.5,327.23 437.0,327.30 436.5,327.37 436.0,327.44 435.5,327.50 435.0,327.57 434.5,327.64 434.0,327.71 433.5,327.78 433.0,327.85 432.5,327.92 432.0,327.99 431.5,328.06 431.0,328.13 430.5,328.20 430.0,328.27 429.5,328.35 429.0,328.42 428.5,328.49 428.0,328.56 427.5,328.64 427.0,328.71 426.5,328.78 426.0,328.85 425.5,328.93 425.0,329.00 424.5,329.08 424.0,329.15 423.5,329.23 423.0,329.30 422.5,329.38 422.0,329.45 421.5,329.53 421.0,329.60 420.5,329.68 420.0,329.76 419.5,329.83 419.0,329.91 418.5,329.99 418.0,330.07 417.5,330.15 417.0,330.22 416.5,330.30 416.0,330.38 415.5,330.46 415.0,330.54 414.5,330.62 414.0,330.70 413.5,330.78 413.0,330.86 412.5,330.94 412.0,331.02 411.5,331.11 411.0,331.19 410.5,331.27 410.0,331.35 409.5,331.43 409.0,331.52 408.5,331.60 408.0,331.69 407.5,331.77 407.0,331.85 406.5,331.94 406.0,332.02 405.5,332.11 405.0,332.19 404.5,332.28 404.0,332.37 403.5,332.45 403.0,332.54 402.5,332.63 402.0,332.71 401.5,332.80 401.0,332.89 400.5,332.98 400.0,333.07 399.5,333.16 399.0,333.25 398.5,333.34 398.0,333.43 397.5,333.52 397.0,333.61 396.5,333.70 396.0,333.79 395.5,333.88 395.0,333.97 394.5,334.06 394.0,334.16 393.5,334.25 393.0,334.34 392.5,334.44 392.0,334.53 391.5,334.63 391.0,334.72 390.5,334.82 390.0,334.91 389.5,335.01 389.0,335.10 388.5,335.20 388.0,335.30 387.5,335.39 387.0,335.49 386.5,335.59 386.0,335.69 385.5,335.78 385.0,335.88 384.5,335.98 384.0,336.08 383.5,336.18 383.0,336.28 382.5,336.38 382.0,336.48 381.5,336.59 381.0,336.69 380.5,336.79 380.0,336.89 379.5,336.99 379.0,337.10 378.5,337.20 378.0,337.31 377.5,337.41 377.0,337.51 376.5,337.62 376.0,337.73 375.5,337.83 375.0,337.94 374.5,338.04 374.0,338.15 373.5,338.26 373.0,338.37 372.5,338.47 372.0,338.58 371.5,338.69 371.0,338.80 370.5,338.91 370.0,339.02 369.5,339.13 369.0,339.24 368.5,339.35 368.0,339.47 367.5,339.58 367.0,339.69 366.5,339.80 366.0,339.92 365.5,340.03 365.0,340.14 364.5,340.26 364.0,340.37 363.5,340.49 363.0,340.60 362.5,340.72 362.0,340.84 361.5,340.95 361.0,341.07 360.5,341.19 360.0,341.31 359.5,341.43 359.0,341.55 358.5,341.67 358.0,341.79 357.5,341.91 357.0,342.03 356.5,342.15 356.0,342.27 355.5,342.39 355.0,342.51 354.5,342.64 354.0,342.76 353.5,342.88 353.0,343.01 352.5,343.13 352.0,343.26 351.5,343.38 351.0,343.51 350.5,343.64 350.0,343.76 349.5,343.89 349.0,344.02 348.5,344.15 348.0,344.28 347.5,344.41 347.0,344.54 346.5,344.67 346.0,344.80 345.5,344.93 345.0,345.06 344.5,345.19 344.0,345.32 343.5,345.46 343.0,345.59 342.5,345.72 342.0,345.86 341.5,345.99 341.0,346.13 340.5,346.27 340.0,346.40 339.5,346.54 339.0,346.68 338.5,346.81 338.0,346.95 337.5,347.09 337.0,347.23 336.5,347.37 336.0,347.51 335.5,347.65 335.0,347.79 334.5,347.93 334.0,348.08 333.5,348.22 333.0,348.36 332.5,348.51 332.0,348.65 331.5,348.79 331.0,348.94 330.5,349.09 330.0,349.23 329.5,349.38 329.0,349.53 328.5,349.67 328.0,349.82 327.5,349.97 327.0,350.12 326.5,350.27 326.0,350.42 325.5,350.57 325.0,350.72 324.5,350.88 324.0,351.03 323.5,351.18 323.0,351.34 322.5,351.49 322.0,351.64 321.5,351.80 321.0,351.96 320.5,352.11 320.0,352.27 319.5,352.43 319.0,352.58 318.5,352.74 318.0,352.90 317.5,353.06 317.0,353.22 316.5,353.38 316.0,353.54 315.5,353.71 315.0,353.87 314.5,354.03 314.0,354.20 313.5,354.36 313.0,354.53 312.5,354.69 312.0,354.86 311.5,355.02 311.0,355.19 310.5,355.36 310.0,355.53 309.5,355.70 309.0,355.87 308.5,356.04 308.0,356.21 307.5,356.38 307.0,356.55 306.5,356.72 306.0,356.90 305.5,357.07 305.0,357.24 304.5,357.42 304.0,357.59 303.5,357.77 303.0,357.95 302.5,358.12 302.0,358.30 301.5,358.48 301.0,358.66 300.5,358.84 300.0,359.02 299.5,359.20 299.0,359.38 298.5,359.57 298.0,359.75 297.5,359.93 297.0,360.12 296.5,360.30 296.0,360.49 295.5,360.67 295.0,360.86 294.5,361.05 294.0,361.24 293.5,361.43 293.0,361.62 292.5,361.81 292.0,362.00 291.5,362.19 291.0,362.38 290.5,362.57 290.0,362.77 289.5,362.96 289.0,363.16 288.5,363.35 288.0,363.55 287.5,363.74 287.0,363.94 286.5,364.14 286.0,364.34 285.5,364.54 285.0,364.74 284.5,364.94 284.0,365.14 283.5,365.35 283.0,365.55 282.5,365.75 282.0,365.96 281.5,366.16 281.0,366.37 280.5,366.58 280.0,366.78 279.5,366.99 279.0,367.20 278.5,367.41 278.0,367.62 277.5,367.83 277.0,368.04 276.5,368.26 276.0,368.47 275.5,368.68 275.0,368.90 274.5,369.11 274.0,369.33 273.5,369.55 273.0,369.76 272.5,369.98 272.0,370.20 271.5,370.42 271.0,370.64 270.5,370.86 270.0,371.09 269.5,371.31 269.0,371.53 268.5,371.76 268.0,371.98 267.5,372.21 267.0,372.44 266.5,372.66 266.0,372.89 265.5,373.12 265.0,373.35 264.5,373.58 264.0,373.82 263.5,374.05 263.0,374.28 262.5,374.52 262.0,374.75 261.5,374.99 261.0,375.22 260.5,375.46 260.0,375.70 259.5,375.94 259.0,376.18 258.5,376.42 258.0,376.66 257.5,376.90 257.0,377.15 256.5,377.39 256.0,377.63 255.5,377.88 255.0,378.13 254.5,378.37 254.0,378.62 253.5,378.87 253.0,379.12 252.5,379.37 252.0,379.62 251.5,379.88 251.0,380.13 250.5,380.38 250.0,380.64 249.5,380.90 249.0,381.15 248.5,381.41 248.0,381.67 247.5,381.93 247.0,382.19 246.5,382.45 246.0,382.71 245.5,382.98 245.0,383.24 244.5,383.51 244.0,383.77 243.5,384.04 243.0,384.31 242.5,384.58 242.0,384.85 241.5,385.12 241.0,385.39 240.5,385.66 240.0,385.93 239.5,386.21 239.0,386.48 238.5,386.76 238.0,387.04 237.5,387.32 237.0,387.59 236.5,387.87 236.0,388.16 235.5,388.44 235.0,388.72 234.5,389.01 234.0,389.29 233.5,389.58 233.0,389.86 232.5,390.15 232.0,390.44 231.5,390.73 231.0,391.02 230.5,391.31 230.0,391.61 229.5,391.90 229.0,392.19 228.5,392.49 228.0,392.79 227.5,393.09 227.0,393.38 226.5,393.68 226.0,393.99 225.5,394.29 225.0,394.59 224.5,394.90 224.0,395.20 223.5,395.51 223.0,395.81 222.5,396.12 222.0,396.43 221.5,396.74 221.0,397.05 220.5,397.37 220.0,397.68 219.5,398.00 219.0,398.31 218.5,398.63 218.0,398.95 217.5,399.27 217.0,399.59 216.5,399.91 216.0,400.23 215.5,400.56 215.0,400.88 214.5,401.21 214.0,401.53 213.5,401.86 213.0,402.19 212.5,402.52 212.0,402.85 211.5,403.19 211.0,403.52 210.5,403.85 210.0,404.19 209.5,404.53 209.0,404.87 208.5,405.21 208.0,405.55 207.5,405.89 207.0,406.23 206.5,406.58 206.0,406.92 205.5,407.27 205.0,407.62 204.5,407.97 204.0,408.32 203.5,408.67 203.0,409.02 202.5,409.38 202.0,409.73 201.5,410.09 201.0,410.45 200.5,410.81 200.0,411.17 199.5,411.53 199.0,411.89 198.5,412.25 198.0,412.62 197.5,412.99 197.0,413.35 196.5,413.72 196.0,414.09 195.5,414.47 195.0,414.84 194.5,415.21 194.0,415.59 193.5,415.96 193.0,416.34 192.5,416.72 192.0,417.10 191.5,417.49 191.0,417.87 190.5,418.25 190.0,418.64 189.5,419.03 189.0,419.42 188.5,419.81 188.0,420.20 187.5,420.59 187.0,420.99 186.5,421.38 186.0,421.78 185.5,422.18 185.0,422.58 184.5,422.98 184.0,423.38 183.5,423.78 183.0,424.19 182.5,424.60 182.0,425.01 181.5,425.41 181.0,425.83 180.5,426.24 180.0,426.65 179.5,427.07 179.0,427.48 178.5,427.90 178.0,428.32 177.5,428.74 177.0,429.17 176.5,429.59 176.0,430.02 175.5,430.44 175.0,430.87 174.5,431.30 174.0,431.74 173.5,432.17 173.0,432.60 172.5,433.04 172.0,433.48 171.5,433.92 171.0,434.36 170.5,434.80 170.0,435.24 169.5,435.69 169.0,436.14 168.5,436.59 168.0,437.04 167.5,437.49 167.0,437.94 166.5,438.40 166.0,438.85 165.5,439.31 165.0,439.77 164.5,440.23 164.0,440.70 163.5,441.16 163.0,441.63 162.5,442.09 162.0,442.56 161.5,443.04 161.0,443.51 160.5,443.98 160.0,444.46 159.5,444.94 159.0,445.42 158.5,445.90 158.0,446.38 157.5,446.87 157.0,447.35 156.5,447.84 156.0,448.33 155.5,448.82 155.0,449.32 154.5,449.81 154.0,450.31 153.5,450.81 153.0,451.31 152.5,451.81 152.0,452.31 151.5,452.82 151.0,453.33 150.5,453.84 150.0,454.35 149.5,454.86 149.0,455.38 148.5,455.89 148.0,456.41 147.5,456.93 147.0,457.46 146.5,457.98 146.0,458.51 145.5,459.03 145.0,459.56 144.5,460.09 144.0,460.63 143.5,461.16 143.0,461.70 142.5,462.24 142.0,462.78 141.5,463.32 141.0,463.87 140.5,464.42 140.0,464.97 139.5,465.52 139.0,466.07 138.5,466.62 138.0,467.18 137.5,467.74 137.0,468.30 136.5,468.86 136.0,469.43 135.5,470.00 135.0,470.57 134.5,471.14 134.0,471.71 133.5,472.29 133.0,472.86 132.5,473.44 132.0,474.02 131.5,474.61 131.0,475.19 130.5,475.78 130.0,476.37 129.5,476.96 129.0,477.56 128.5,478.15 128.0,478.75 127.5,479.35 127.0,479.95 126.5,480.56 126.0,481.17 125.5,481.78 125.0,482.39 124.5,483.00 124.0,483.62 123.5,484.24 123.0,484.86 122.5,485.48 122.0,486.10 121.5,486.73 121.0,487.10 120.5,487.10 120.0,487.10 119.5,487.10 119.0,487.10 118.5,487.10 118.0,487.10 117.5,487.10 117.0,487.10 116.5,487.10 116.0,487.10 115.5,487.10 115.0,487.10 114.5,487.10 114.0,487.10 113.5,487.10 113.0,487.10 112.5,487.10 112.0,487.10 111.5,487.10 111.0,487.10 110.5,487.10 110.0,487.10 109.5,487.10 109.0,487.10 108.5,487.10 108.0,487.10 107.5,487.10 107.0,487.10 106.5,487.10 106.0,487.10 105.5,487.10 105.0,487.10 104.5,487.10 104.0,487.10 103.5,487.10 103.0,487.10 102.5,487.10 102.0,487.10 101.5,487.10 101.0,487.10 100.5,487.10 100.0,487.10 99.5,487.10 99.0,487.10 98.5,487.10 98.0,487.10 97.5,487.10 97.0,487.10 96.5,487.10 96.0,487.10 95.5,487.10 95.0,487.10 94.5,487.10 94.0,487.10 93.5,487.10 93.0,487.10 92.5,487.10 92.0,487.10 91.5,487.10 91.0,487.10 90.5,487.10 90.0,487.10 89.5,487.10 89.0,487.10 88.5,487.10 88.0,487.10 87.5,487.10 87.0,487.10 86.5,487.10 86.0,487.10 85.5,487.10 85.0,487.10 84.5,487.10 84.0,487.10 83.5,487.10 83.0,487.10 82.5,487.10 82.0,487.10 81.5,487.10 81.0,487.10 80.5,487.10 80.0,487.10 79.5,487.10 79.0,487.10 78.5,487.10 78.0,487.10 77.5,487.10 77.0,487.10 76.5,487.10 76.0,487.10 75.5,487.10 75.0,487.10 74.5,487.10 74.0,487.10 73.5,487.10 73.0,487.10 72.5,487.10 72.0,487.10 71.5,487.10 71.0,487.10 70.5,487.10 70.0,487.10 69.5,487.10 69.0,487.10 68.5,487.10 68.0,487.10 67.5,487.10 67.0,487.10 66.5,487.10 66.0,487.10 65.5,487.10 65.0,487.10 64.5,487.10 64.0,487.10 63.5,487.10 63.0,487.10 62.5,487.10 62.0,487.10 61.5,487.10 61.0,487.10 60.5,487.10 60.0,487.10 59.5,487.10 59.0,487.10 58.5,487.10 58.0,487.10 57.5,487.10 57.0,487.10 56.5,487.10 56.0,487.10 55.5,487.10" fill="#737314"/>
<polyline points="55.5,487.90 56.0,487.90 56.5,487.90 57.0,487.90 57.5,487.90 58.0,487.90 58.5,487.90 59.0,487.90 59.5,487.90 60.0,487.90 60.5,487.90 61.0,487.90 61.5,487.90 62.0,487.90 62.5,487.90 63.0,487.90 63.5,487.90 64.0,487.90 64.5,487.90 65.0,487.90 65.5,487.90 66.0,487.90 66.5,487.90 67.0,487.90 67.5,487.90 68.0,487.90 68.5,487.90 69.0,487.90 69.5,487.90 70.0,487.90 70.5,487.90 71.0,487.90 71.5,487.90 72.0,487.90 72.5,487.90 73.0,487.90 73.5,487.90 74.0,487.90 74.5,487.90 75.0,487.90 75.5,487.90 76.0,487.90 76.5,487.90 77.0,487.90 77.5,487.90 78.0,487.90 78.5,487.90 79.0,487.90 79.5,487.90 80.0,487.90 80.5,487.90 81.0,487.90 81.5,487.90 82.0,487.90 82.5,487.90 83.0,487.90 83.5,487.73 84.0,487.04 84.5,486.36 85.0,485.69 85.5,485.01 86.0,484.34 86.5,483.67 87.0,483.00 87.5,482.34 88.0,481.68 88.5,481.02 89.0,480.36 89.5,479.71 90.0,479.06 90.5,478.41 91.0,477.76 91.5,477.12 92.0,476.48 92.5,475.84 93.0,475.20 93.5,474.57 94.0,473.94 94.5,473.31 95.0,472.68 95.5,472.05 96.0,471.43 96.5,470.81 97.0,470.20 97.5,469.58 98.0,468.97 98.5,468.36 99.0,467.75 99.5,467.14 100.0,466.54 100.5,465.94 101.0,465.34 101.5,464.75 102.0,464.15 102.5,463.56 103.0,462.97 103.5,462.38 104.0,461.80 104.5,461.22 105.0,460.63 105.5,460.06 106.0,459.48 106.5,458.91 107.0,458.33 107.5,457.77 108.0,457.20 108.5,456.63 109.0,456.07 109.5,455.51 110.0,454.95 110.5,454.39 111.0,453.84 111.5,453.29 112.0,452.74 112.5,452.19 113.0,451.64 113.5,451.10 114.0,450.56 114.5,450.02 115.0,449.48 115.5,448.95 116.0,448.41 116.5,447.88 117.0,447.35 117.5,446.83 118.0,446.30 118.5,445.78 119.0,445.26 119.5,444.74 120.0,444.22 120.5,443.70 121.0,443.19 121.5,442.68 122.0,442.17 122.5,441.66 123.0,441.16 123.5,440.65 124.0,440.15 124.5,439.65 125.0,439.15 125.5,438.66 126.0,438.17 126.5,437.67 127.0,437.18 127.5,436.69 128.0,436.21 128.5,435.72 129.0,435.24 129.5,434.76 130.0,434.28 130.5,433.80 131.0,433.33 131.5,432.86 132.0,432.38 132.5,431.91 133.0,431.45 133.5,430.98 134.0,430.52 134.5,430.05 135.0,429.59 135.5,429.13 136.0,428.68 136.5,428.22 137.0,427.77 137.5,427.31 138.0,426.86 138.5,426.42 139.0,425.97 139.5,425.52 140.0,425.08 140.5,424.64 141.0,424.20 141.5,423.76 142.0,423.32 142.5,422.89 143.0,422.45 143.5,422.02 144.0,421.59 144.5,421.16 145.0,420.74 145.5,420.31 146.0,419.89 146.5,419.47 147.0,419.05 147.5,418.63 148.0,418.21 148.5,417.80 149.0,417.38 149.5,416.97 150.0,416.56 150.5,416.15 151.0,415.74 151.5,415.34 152.0,414.93 152.5,414.53 153.0,414.13 153.5,413.73 154.0,413.33 154.5,412.93 155.0,412.54 155.5,412.15 156.0,411.75 156.5,411.36 157.0,410.97 157.5,410.59 158.0,410.20 158.5,409.82 159.0,409.43 159.5,409.05 160.0,408.67 160.5,408.29 161.0,407.91 161.5,407.54 162.0,407.16 162.5,406.79 163.0,406.42 163.5,406.05 164.0,405.68 164.5,405.31 165.0,404.95 165.5,404.58 166.0,404.22 166.5,403.86 167.0,403.50 167.5,403.14 168.0,402.78 168.5,402.42 169.0,402.07 169.5,401.72 170.0,401.36 170.5,401.01 171.0,400.66 171.5,400.32 172.0,399.97 172.5,399.62 173.0,399.28 173.5,398.94 174.0,398.60 174.5,398.26 175.0,397.92 175.5,397.58 176.0,397.24 176.5,396.91 177.0,396.57 177.5,396.24 178.0,395.91 178.5,395.58 179.0,395.25 179.5,394.93 180.0,394.60 180.5,394.28 181.0,393.95 181.5,393.63 182.0,393.31 182.5,392.99 183.0,392.67 183.5,392.35 184.0,392.04 184.5,391.72 185.0,391.41 185.5,391.10 186.0,390.78 186.5,390.47 187.0,390.17 187.5,389.86 188.0,389.55 188.5,389.25 189.0,388.94 189.5,388.64 190.0,388.34 190.5,388.04 191.0,387.74 191.5,387.44 192.0,387.14 192.5,386.84 193.0,386.55 193.5,386.26 194.0,385.96 194.5,385.67 195.0,385.38 195.5,385.09 196.0,384.80 196.5,384.52 197.0,384.23 197.5,383.94 198.0,383.66 198.5,383.38 199.0,383.10 199.5,382.82 200.0,382.54 200.5,382.26 201.0,381.98 201.5,381.70 202.0,381.43 202.5,381.15 203.0,380.88 203.5,380.61 204.0,380.34 204.5,380.07 205.0,379.80 205.5,379.53 206.0,379.26 206.5,379.00 207.0,378.73 207.5,378.47 208.0,378.21 208.5,377.95 209.0,377.68 209.5,377.42 210.0,377.17 210.5,376.91 211.0,376.65 211.5,376.40 212.0,376.14 212.5,375.89 213.0,375.63 213.5,375.38 214.0,375.13 214.5,374.88 215.0,374.63 215.5,374.38 216.0,374.14 216.5,373.89 217.0,373.64 217.5,373.40 218.0,373.16 218.5,372.91 219.0,372.67 219.5,372.43 220.0,372.19 220.5,371.95 221.0,371.72 221.5,371.48 222.0,371.24 222.5,371.01 223.0,370.77 223.5,370.54 224.0,370.31 224.5,370.08 225.0,369.85 225.5,369.62 226.0,369.39 226.5,369.16 227.0,368.93 227.5,368.71 228.0,368.48 228.5,368.26 229.0,368.03 229.5,367.81 230.0,367.59 230.5,367.37 231.0,367.15 231.5,366.93 232.0,366.71 232.5,366.49 233.0,366.27 233.5,366.06 234.0,365.84 234.5,365.63 235.0,365.42 235.5,365.20 236.0,364.99 236.5,364.78 237.0,364.57 237.5,364.36 238.0,364.15 238.5,363.94 239.0,363.74 239.5,363.53 240.0,363.32 240.5,363.12 241.0,362.92 241.5,362.71 242.0,362.51 242.5,362.31 243.0,362.11 243.5,361.91 244.0,361.71 244.5,361.51 245.0,361.31 245.5,361.12 246.0,360.92 246.5,360.72 247.0,360.53 247.5,360.34 248.0,360.14 248.5,359.95 249.0,359.76 249.5,359.57 250.0,359.38 250.5,359.19 251.0,359.00 251.5,358.81 252.0,358.62 252.5,358.44 253.0,358.25 253.5,358.06 254.0,357.88 254.5,357.70 255.0,357.51 255.5,357.33 256.0,357.15 256.5,356.97 257.0,356.79 257.5,356.61 258.0,356.43 258.5,356.25 259.0,356.07 259.5,355.90 260.0,355.72 260.5,355.55 261.0,355.37 261.5,355.20 262.0,355.02 262.5,354.85 263.0,354.68 263.5,354.51 264.0,354.34 264.5,354.17 265.0,354.00 265.5,353.83 266.0,353.66 266.5,353.49 267.0,353.32 267.5,353.16 268.0,352.99 268.5,352.83 269.0,352.66 269.5,352.50 270.0,352.34 270.5,352.17 271.0,352.01 271.5,351.85 272.0,351.69 272.5,351.53 273.0,351.37 273.5,351.21 274.0,351.05 274.5,350.90 275.0,350.74 275.5,350.58 276.0,350.43 276.5,350.27 277.0,350.12 277.5,349.96 278.0,349.81 278.5,349.66 279.0,349.50 279.5,349.35 280.0,349.20 280.5,349.05 281.0,348.90 281.5,348.75 282.0,348.60 282.5,348.45 283.0,348.31 283.5,348.16 284.0,348.01 284.5,347.87 285.0,347.72 285.5,347.58 286.0,347.43 286.5,347.29 287.0,347.15 287.5,347.00 288.0,346.86 288.5,346.72 289.0,346.58 289.5,346.44 290.0,346.30 290.5,346.16 291.0,346.02 291.5,345.88 292.0,345.74 292.5,345.61 293.0,345.47 293.5,345.33 294.0,345.20 294.5,345.06 295.0,344.93 295.5,344.79 296.0,344.66 296.5,344.53 297.0,344.40 297.5,344.26 298.0,344.13 298.5,344.00 299.0,343.87 299.5,343.74 300.0,343.61 300.5,343.48 301.0,343.35 301.5,343.23 302.0,343.10 302.5,342.97 303.0,342.84 303.5,342.72 304.0,342.59 304.5,342.47 305.0,342.34 305.5,342.22 306.0,342.10 306.5,341.97 307.0,341.85 307.5,341.73 308.0,341.61 308.5,341.48 309.0,341.36 309.5,341.24 310.0,341.12 310.5,341.00 311.0,340.88 311.5,340.77 312.0,340.65 312.5,340.53 313.0,340.41 313.5,340.30 314.0,340.18 314.5,340.06 315.0,339.95 315.5,339.83 316.0,339.72 316.5,339.60 317.0,339.49 317.5,339.38 318.0,339.27 318.5,339.15 319.0,339.04 319.5,338.93 320.0,338.82 320.5,338.71 321.0,338.60 321.5,338.49 322.0,338.38 322.5,338.27 323.0,338.16 323.5,338.05 324.0,337.95 324.5,337.84 325.0,337.73 325.5,337.62 326.0,337.52 326.5,337.41 327.0,337.31 327.5,337.20 328.0,337.10 328.5,336.99 329.0,336.89 329.5,336.79 330.0,336.68 330.5,336.58 331.0,336.48 331.5,336.38 332.0,336.28 332.5,336.18 333.0,336.08 333.5,335.98 334.0,335.88 334.5,335.78 335.0,335.68 335.5,335.58 336.0,335.48 336.5,335.38 337.0,335.29 337.5,335.19 338.0,335.09 338.5,335.00 339.0,334.90 339.5,334.80 340.0,334.71 340.5,334.61 341.0,334.52 341.5,334.43 342.0,334.33 342.5,334.24 343.0,334.15 343.5,334.05 344.0,333.96 344.5,333.87 345.0,333.78 345.5,333.69 346.0,333.59 346.5,333.50 347.0,333.41 347.5,333.32 348.0,333.23 348.5,333.15 349.0,333.06 349.5,332.97 350.0,332.88 350.5,332.79 351.0,332.70 351.5,332.62 352.0,332.53 352.5,332.44 353.0,332.36 353.5,332.27 354.0,332.19 354.5,332.10 355.0,332.02 355.5,331.93 356.0,331.85 356.5,331.76 357.0,331.68 357.5,331.60 358.0,331.51 358.5,331.43 359.0,331.35 359.5,331.27 360.0,331.19 360.5,331.10 361.0,331.02 361.5,330.94 362.0,330.86 362.5,330.78 363.0,330.70 363.5,330.62 364.0,330.54 364.5,330.46 365.0,330.39 365.5,330.31 366.0,330.23 366.5,330.15 367.0,330.07 367.5,330.00 368.0,329.92 368.5,329.84 369.0,329.77 369.5,329.69 370.0,329.62 370.5,329.54 371.0,329.47 371.5,329.39 372.0,329.32 372.5,329.24 373.0,329.17 373.5,329.10 374.0,329.02 374.5,328.95 375.0,328.88 375.5,328.80 376.0,328.73 376.5,328.66 377.0,328.59 377.5,328.52 378.0,328.45 378.5,328.38 379.0,328.30 379.5,328.23 380.0,328.16 380.5,328.09 381.0,328.03 381.5,327.96 382.0,327.89 382.5,327.82 383.0,327.75 383.5,327.68 384.0,327.61 384.5,327.55 385.0,327.48 385.5,327.41 386.0,327.35 386.5,327.28 387.0,327.21 387.5,327.15 388.0,327.08 388.5,327.01 389.0,326.95 389.5,326.88 390.0,326.82 390.5,326.76 391.0,326.69 391.5,326.63 392.0,326.56 392.5,326.50 393.0,326.44 393.5,326.37 394.0,326.31 394.5,326.25 395.0,326.19 395.5,326.12 396.0,326.06 396.5,326.00 397.0,325.94 397.5,325.88 398.0,325.82 398.5,325.76 399.0,325.69 399.5,325.63 400.0,325.57 400.5,325.51 401.0,325.46 401.5,325.40 402.0,325.34 402.5,325.28 403.0,325.22 403.5,325.16 404.0,325.10 404.5,325.04 405.0,324.99 405.5,324.93 406.0,324.87 406.5,324.81 407.0,324.76 407.5,324.70 408.0,324.64 408.5,324.59 409.0,324.53 409.5,324.48 410.0,324.42 410.5,324.37 411.0,324.31 411.5,324.26 412.0,324.20 412.5,324.15 413.0,324.09 413.5,324.04 414.0,323.98 414.5,323.93 415.0,323.88 415.5,323.82 416.0,323.77 416.5,323.72 417.0,323.67 417.5,323.61 418.0,323.56 418.5,323.51 419.0,323.46 419.5,323.40 420.0,323.35 420.5,323.30 421.0,323.25 421.5,323.20 422.0,323.15 422.5,323.10 423.0,323.05 423.5,323.00 424.0,322.95 424.5,322.90 425.0,322.85 425.5,322.80 426.0,322.75 426.5,322.70 427.0,322.65 427.5,322.60 428.0,322.56 428.5,322.51 429.0,322.46 429.5,322.41 430.0,322.36 430.5,322.32 431.0,322.27 431.5,322.22 432.0,322.18 432.5,322.13 433.0,322.08 433.5,322.04 434.0,321.99 434.5,321.94 435.0,321.90 435.5,321.85 436.0,321.81 436.5,321.76 437.0,321.72 437.5,321.67 438.0,321.63 438.5,321.58 439.0,321.54 439.5,321.49 440.0,321.45 440.5,321.41 441.0,321.36 441.5,321.32 442.0,321.27 442.5,321.23 443.0,321.19 443.5,321.15 444.0,321.10 444.5,321.06 445.0,321.02 445.5,320.98 446.0,320.93 446.5,320.89 447.0,320.85 447.5,320.81 448.0,320.77 448.5,320.72 449.0,320.68 449.5,320.64 450.0,320.60 450.5,320.56 451.0,320.52 451.5,320.48 452.0,320.44 452.5,320.40 453.0,320.36 453.5,320.32 454.0,320.28 454.5,320.24 455.0,320.20 455.5,320.16 456.0,320.12 456.5,320.08 457.0,320.05 457.5,320.01 458.0,319.97 458.5,319.93 459.0,319.89 459.5,319.85 460.0,319.82 460.5,319.78 461.0,319.74 461.5,319.70 462.0,319.67 462.5,319.63 463.0,319.59 463.5,319.56 464.0,319.52 464.5,319.48 465.0,319.45 465.5,319.41 466.0,319.37 466.5,319.34 467.0,319.30 467.5,319.27 468.0,319.23 468.5,319.20 469.0,319.16 469.5,319.12 470.0,319.09 470.5,319.06 471.0,319.02 471.5,318.99 472.0,318.95 472.5,318.92 473.0,318.88 473.5,318.85 474.0,318.81 474.5,318.78 475.0,318.75 475.5,318.71 476.0,318.68 476.5,318.65 477.0,318.61 477.5,318.58 478.0,318.55 478.5,318.51 479.0,318.48 479.5,318.45 480.0,318.42 480.5,318.38 481.0,318.35 481.5,318.32 482.0,318.29 482.5,318.26 483.0,318.22 483.5,318.19 484.0,318.16 484.5,318.13 485.0,318.10 485.5,318.07 486.0,318.04 486.5,318.01 487.0,317.98 487.5,317.95 488.0,317.91 488.5,317.88 489.0,317.85 489.5,317.82 490.0,317.79 490.5,317.76 491.0,317.73 491.5,317.70 492.0,317.67 492.5,317.65 493.0,317.62 493.5,317.59 494.0,317.56 494.5,317.53 495.0,317.50 495.5,317.47 496.0,317.44 496.5,317.41 497.0,317.39 497.5,317.36 498.0,317.33 498.5,317.30 499.0,317.27 499.5,317.24 500.0,317.22 500.5,317.19 501.0,317.16 501.5,317.13 502.0,317.11 502.5,317.08 503.0,317.05 503.5,317.02 504.0,317.00 504.5,316.97 505.0,316.94 505.5,316.92 506.0,316.89 506.5,316.86 507.0,316.84 507.5,316.81 508.0,316.79 508.5,316.76 509.0,316.73 509.5,316.71 510.0,316.68 510.5,316.66 511.0,316.63 511.5,316.61 512.0,316.58 512.5,316.56 513.0,316.53 513.5,316.50 514.0,316.48 514.5,316.46 515.0,316.43 515.5,316.41 516.0,316.38 516.5,316.36 517.0,316.33 517.5,316.31 518.0,316.28 518.5,316.26 519.0,316.24 519.5,316.21" fill="none" stroke="#8c8c20" stroke-width="1.6"/>
<polyline points="55.5,486.30 56.0,486.30 56.5,486.30 57.0,486.30 57.5,486.30 58.0,486.30 58.5,486.30 59.0,486.30 59.5,486.30 60.0,486.30 60.5,486.30 61.0,486.30 61.5,486.30 62.0,486.30 62.5,486.30 63.0,486.30 63.5,486.30 64.0,486.30 64.5,486.30 65.0,486.30 65.5,486.30 66.0,486.30 66.5,486.30 67.0,486.30 67.5,486.30 68.0,486.30 68.5,486.30 69.0,486.30 69.5,486.30 70.0,486.30 70.5,486.30 71.0,486.30 71.5,486.30 72.0,486.30 72.5,486.30 73.0,486.30 73.5,486.30 74.0,486.30 74.5,486.30 75.0,486.30 75.5,486.30 76.0,486.30 76.5,486.30 77.0,486.30 77.5,486.30 78.0,486.30 78.5,486.30 79.0,486.30 79.5,486.30 80.0,486.30 80.5,486.30 81.0,486.30 81.5,486.30 82.0,486.30 82.5,486.30 83.0,486.30 83.5,486.30 84.0,486.30 84.5,486.30 85.0,486.30 85.5,486.30 86.0,486.30 86.5,486.30 87.0,486.30 87.5,486.30 88.0,486.30 88.5,486.30 89.0,486.30 89.5,486.30 90.0,486.30 90.5,486.30 91.0,486.30 91.5,486.30 92.0,486.30 92.5,486.30 93.0,486.30 93.5,486.30 94.0,486.30 94.5,486.30 95.0,486.30 95.5,486.30 96.0,486.30 96.5,486.30 97.0,486.30 97.5,486.30 98.0,486.30 98.5,486.30 99.0,486.30 99.5,486.30 100.0,486.30 100.5,486.30 101.0,486.30 101.5,486.30 102.0,486.30 102.5,486.30 103.0,486.30 103.5,486.30 104.0,486.30 104.5,486.30 105.0,486.30 105.5,486.30 106.0,486.30 106.5,486.30 107.0,486.30 107.5,486.30 108.0,486.30 108.5,486.30 109.0,486.30 109.5,486.30 110.0,486.30 110.5,486.30 111.0,486.30 111.5,486.30 112.0,486.30 112.5,486.30 113.0,486.30 113.5,486.30 114.0,486.30 114.5,486.30 115.0,486.30 115.5,486.30 116.0,486.30 116.5,486.30 117.0,486.30 117.5,486.30 118.0,486.30 118.5,486.30 119.0,486.30 119.5,486.30 120.0,486.30 120.5,486.30 121.0,486.30 121.5,485.93 122.0,485.30 122.5,484.68 123.0,484.06 123.5,483.44 124.0,482.82 124.5,482.20 125.0,481.59 125.5,480.98 126.0,480.37 126.5,479.76 127.0,479.15 127.5,478.55 128.0,477.95 128.5,477.35 129.0,476.76 129.5,476.16 130.0,475.57 130.5,474.98 131.0,474.39 131.5,473.81 132.0,473.22 132.5,472.64 133.0,472.06 133.5,471.49 134.0,470.91 134.5,470.34 135.0,469.77 135.5,469.20 136.0,468.63 136.5,468.06 137.0,467.50 137.5,466.94 138.0,466.38 138.5,465.82 139.0,465.27 139.5,464.72 140.0,464.17 140.5,463.62 141.0,463.07 141.5,462.52 142.0,461.98 142.5,461.44 143.0,460.90 143.5,460.36 144.0,459.83 144.5,459.29 145.0,458.76 145.5,458.23 146.0,457.71 146.5,457.18 147.0,456.66 147.5,456.13 148.0,455.61 148.5,455.09 149.0,454.58 149.5,454.06 150.0,453.55 150.5,453.04 151.0,452.53 151.5,452.02 152.0,451.51 152.5,451.01 153.0,450.51 153.5,450.01 154.0,449.51 154.5,449.01 155.0,448.52 155.5,448.02 156.0,447.53 156.5,447.04 157.0,446.55 157.5,446.07 158.0,445.58 158.5,445.10 159.0,444.62 159.5,444.14 160.0,443.66 160.5,443.18 161.0,442.71 161.5,442.24 162.0,441.76 162.5,441.29 163.0,440.83 163.5,440.36 164.0,439.90 164.5,439.43 165.0,438.97 165.5,438.51 166.0,438.05 166.5,437.60 167.0,437.14 167.5,436.69 168.0,436.24 168.5,435.79 169.0,435.34 169.5,434.89 170.0,434.44 170.5,434.00 171.0,433.56 171.5,433.12 172.0,432.68 172.5,432.24 173.0,431.80 173.5,431.37 174.0,430.94 174.5,430.50 175.0,430.07 175.5,429.64 176.0,429.22 176.5,428.79 177.0,428.37 177.5,427.94 178.0,427.52 178.5,427.10 179.0,426.68 179.5,426.27 180.0,425.85 180.5,425.44 181.0,425.03 181.5,424.61 182.0,424.21 182.5,423.80 183.0,423.39 183.5,422.98 184.0,422.58 184.5,422.18 185.0,421.78 185.5,421.38 186.0,420.98 186.5,420.58 187.0,420.19 187.5,419.79 188.0,419.40 188.5,419.01 189.0,418.62 189.5,418.23 190.0,417.84 190.5,417.45 191.0,417.07 191.5,416.69 192.0,416.30 192.5,415.92 193.0,415.54 193.5,415.16 194.0,414.79 194.5,414.41 195.0,414.04 195.5,413.67 196.0,413.29 196.5,412.92 197.0,412.55 197.5,412.19 198.0,411.82 198.5,411.45 199.0,411.09 199.5,410.73 200.0,410.37 200.5,410.01 201.0,409.65 201.5,409.29 202.0,408.93 202.5,408.58 203.0,408.22 203.5,407.87 204.0,407.52 204.5,407.17 205.0,406.82 205.5,406.47 206.0,406.12 206.5,405.78 207.0,405.43 207.5,405.09 208.0,404.75 208.5,404.41 209.0,404.07 209.5,403.73 210.0,403.39 210.5,403.05 211.0,402.72 211.5,402.39 212.0,402.05 212.5,401.72 213.0,401.39 213.5,401.06 214.0,400.73 214.5,400.41 215.0,400.08 215.5,399.76 216.0,399.43 216.5,399.11 217.0,398.79 217.5,398.47 218.0,398.15 218.5,397.83 219.0,397.51 219.5,397.20 220.0,396.88 220.5,396.57 221.0,396.25 221.5,395.94 222.0,395.63 222.5,395.32 223.0,395.01 223.5,394.71 224.0,394.40 224.5,394.10 225.0,393.79 225.5,393.49 226.0,393.19 226.5,392.88 227.0,392.58 227.5,392.29 228.0,391.99 228.5,391.69 229.0,391.39 229.5,391.10 230.0,390.81 230.5,390.51 231.0,390.22 231.5,389.93 232.0,389.64 232.5,389.35 233.0,389.06 233.5,388.78 234.0,388.49 234.5,388.21 235.0,387.92 235.5,387.64 236.0,387.36 236.5,387.07 237.0,386.79 237.5,386.52 238.0,386.24 238.5,385.96 239.0,385.68 239.5,385.41 240.0,385.13 240.5,384.86 241.0,384.59 241.5,384.32 242.0,384.05 242.5,383.78 243.0,383.51 243.5,383.24 244.0,382.97 244.5,382.71 245.0,382.44 245.5,382.18 246.0,381.91 246.5,381.65 247.0,381.39 247.5,381.13 248.0,380.87 248.5,380.61 249.0,380.35 249.5,380.10 250.0,379.84 250.5,379.58 251.0,379.33 251.5,379.08 252.0,378.82 252.5,378.57 253.0,378.32 253.5,378.07 254.0,377.82 254.5,377.57 255.0,377.33 255.5,377.08 256.0,376.83 256.5,376.59 257.0,376.35 257.5,376.10 258.0,375.86 258.5,375.62 259.0,375.38 259.5,375.14 260.0,374.90 260.5,374.66 261.0,374.42 261.5,374.19 262.0,373.95 262.5,373.72 263.0,373.48 263.5,373.25 264.0,373.02 264.5,372.78 265.0,372.55 265.5,372.32 266.0,372.09 266.5,371.86 267.0,371.64 267.5,371.41 268.0,371.18 268.5,370.96 269.0,370.73 269.5,370.51 270.0,370.29 270.5,370.06 271.0,369.84 271.5,369.62 272.0,369.40 272.5,369.18 273.0,368.96 273.5,368.75 274.0,368.53 274.5,368.31 275.0,368.10 275.5,367.88 276.0,367.67 276.5,367.46 277.0,367.24 277.5,367.03 278.0,366.82 278.5,366.61 279.0,366.40 279.5,366.19 280.0,365.98 280.5,365.78 281.0,365.57 281.5,365.36 282.0,365.16 282.5,364.95 283.0,364.75 283.5,364.55 284.0,364.34 284.5,364.14 285.0,363.94 285.5,363.74 286.0,363.54 286.5,363.34 287.0,363.14 287.5,362.94 288.0,362.75 288.5,362.55 289.0,362.36 289.5,362.16 290.0,361.97 290.5,361.77 291.0,361.58 291.5,361.39 292.0,361.20 292.5,361.01 293.0,360.82 293.5,360.63 294.0,360.44 294.5,360.25 295.0,360.06 295.5,359.87 296.0,359.69 296.5,359.50 297.0,359.32 297.5,359.13 298.0,358.95 298.5,358.77 299.0,358.58 299.5,358.40 300.0,358.22 300.5,358.04 301.0,357.86 301.5,357.68 302.0,357.50 302.5,357.32 303.0,357.15 303.5,356.97 304.0,356.79 304.5,356.62 305.0,356.44 305.5,356.27 306.0,356.10 306.5,355.92 307.0,355.75 307.5,355.58 308.0,355.41 308.5,355.24 309.0,355.07 309.5,354.90 310.0,354.73 310.5,354.56 311.0,354.39 311.5,354.22 312.0,354.06 312.5,353.89 313.0,353.73 313.5,353.56 314.0,353.40 314.5,353.23 315.0,353.07 315.5,352.91 316.0,352.74 316.5,352.58 317.0,352.42 317.5,352.26 318.0,352.10 318.5,351.94 319.0,351.78 319.5,351.63 320.0,351.47 320.5,351.31 321.0,351.16 321.5,351.00 322.0,350.84 322.5,350.69 323.0,350.54 323.5,350.38 324.0,350.23 324.5,350.08 325.0,349.92 325.5,349.77 326.0,349.62 326.5,349.47 327.0,349.32 327.5,349.17 328.0,349.02 328.5,348.87 329.0,348.73 329.5,348.58 330.0,348.43 330.5,348.29 331.0,348.14 331.5,347.99 332.0,347.85 332.5,347.71 333.0,347.56 333.5,347.42 334.0,347.28 334.5,347.13 335.0,346.99 335.5,346.85 336.0,346.71 336.5,346.57 337.0,346.43 337.5,346.29 338.0,346.15 338.5,346.01 339.0,345.88 339.5,345.74 340.0,345.60 340.5,345.47 341.0,345.33 341.5,345.19 342.0,345.06 342.5,344.92 343.0,344.79 343.5,344.66 344.0,344.52 344.5,344.39 345.0,344.26 345.5,344.13 346.0,344.00 346.5,343.87 347.0,343.74 347.5,343.61 348.0,343.48 348.5,343.35 349.0,343.22 349.5,343.09 350.0,342.96 350.5,342.84 351.0,342.71 351.5,342.58 352.0,342.46 352.5,342.33 353.0,342.21 353.5,342.08 354.0,341.96 354.5,341.84 355.0,341.71 355.5,341.59 356.0,341.47 356.5,341.35 357.0,341.23 357.5,341.11 358.0,340.99 358.5,340.87 359.0,340.75 359.5,340.63 360.0,340.51 360.5,340.39 361.0,340.27 361.5,340.15 362.0,340.04 362.5,339.92 363.0,339.80 363.5,339.69 364.0,339.57 364.5,339.46 365.0,339.34 365.5,339.23 366.0,339.12 366.5,339.00 367.0,338.89 367.5,338.78 368.0,338.67 368.5,338.55 369.0,338.44 369.5,338.33 370.0,338.22 370.5,338.11 371.0,338.00 371.5,337.89 372.0,337.78 372.5,337.67 373.0,337.57 373.5,337.46 374.0,337.35 374.5,337.24 375.0,337.14 375.5,337.03 376.0,336.93 376.5,336.82 377.0,336.71 377.5,336.61 378.0,336.51 378.5,336.40 379.0,336.30 379.5,336.19 380.0,336.09 380.5,335.99 381.0,335.89 381.5,335.79 382.0,335.68 382.5,335.58 383.0,335.48 383.5,335.38 384.0,335.28 384.5,335.18 385.0,335.08 385.5,334.98 386.0,334.89 386.5,334.79 387.0,334.69 387.5,334.59 388.0,334.50 388.5,334.40 389.0,334.30 389.5,334.21 390.0,334.11 390.5,334.02 391.0,333.92 391.5,333.83 392.0,333.73 392.5,333.64 393.0,333.54 393.5,333.45 394.0,333.36 394.5,333.26 395.0,333.17 395.5,333.08 396.0,332.99 396.5,332.90 397.0,332.81 397.5,332.72 398.0,332.63 398.5,332.54 399.0,332.45 399.5,332.36 400.0,332.27 400.5,332.18 401.0,332.09 401.5,332.00 402.0,331.91 402.5,331.83 403.0,331.74 403.5,331.65 404.0,331.57 404.5,331.48 405.0,331.39 405.5,331.31 406.0,331.22 406.5,331.14 407.0,331.05 407.5,330.97 408.0,330.89 408.5,330.80 409.0,330.72 409.5,330.63 410.0,330.55 410.5,330.47 411.0,330.39 411.5,330.31 412.0,330.22 412.5,330.14 413.0,330.06 413.5,329.98 414.0,329.90 414.5,329.82 415.0,329.74 415.5,329.66 416.0,329.58 416.5,329.50 417.0,329.42 417.5,329.35 418.0,329.27 418.5,329.19 419.0,329.11 419.5,329.03 420.0,328.96 420.5,328.88 421.0,328.80 421.5,328.73 422.0,328.65 422.5,328.58 423.0,328.50 423.5,328.43 424.0,328.35 424.5,328.28 425.0,328.20 425.5,328.13 426.0,328.05 426.5,327.98 427.0,327.91 427.5,327.84 428.0,327.76 428.5,327.69 429.0,327.62 429.5,327.55 430.0,327.47 430.5,327.40 431.0,327.33 431.5,327.26 432.0,327.19 432.5,327.12 433.0,327.05 433.5,326.98 434.0,326.91 434.5,326.84 435.0,326.77 435.5,326.70 436.0,326.64 436.5,326.57 437.0,326.50 437.5,326.43 438.0,326.36 438.5,326.30 439.0,326.23 439.5,326.16 440.0,326.10 440.5,326.03 441.0,325.96 441.5,325.90 442.0,325.83 442.5,325.77 443.0,325.70 443.5,325.64 444.0,325.57 444.5,325.51 445.0,325.44 445.5,325.38 446.0,325.32 446.5,325.25 447.0,325.19 447.5,325.13 448.0,325.06 448.5,325.00 449.0,324.94 449.5,324.88 450.0,324.82 450.5,324.75 451.0,324.69 451.5,324.63 452.0,324.57 452.5,324.51 453.0,324.45 453.5,324.39 454.0,324.33 454.5,324.27 455.0,324.21 455.5,324.15 456.0,324.09 456.5,324.03 457.0,323.97 457.5,323.92 458.0,323.86 458.5,323.80 459.0,323.74 459.5,323.68 460.0,323.63 460.5,323.57 461.0,323.51 461.5,323.46 462.0,323.40 462.5,323.34 463.0,323.29 463.5,323.23 464.0,323.17 464.5,323.12 465.0,323.06 465.5,323.01 466.0,322.95 466.5,322.90 467.0,322.84 467.5,322.79 468.0,322.74 468.5,322.68 469.0,322.63 469.5,322.57 470.0,322.52 470.5,322.47 471.0,322.42 471.5,322.36 472.0,322.31 472.5,322.26 473.0,322.21 473.5,322.15 474.0,322.10 474.5,322.05 475.0,322.00 475.5,321.95 476.0,321.90 476.5,321.85 477.0,321.80 477.5,321.74 478.0,321.69 478.5,321.64 479.0,321.59 479.5,321.54 480.0,321.50 480.5,321.45 481.0,321.40 481.5,321.35 482.0,321.30 482.5,321.25 483.0,321.20 483.5,321.15 484.0,321.11 484.5,321.06 485.0,321.01 485.5,320.96 486.0,320.92 486.5,320.87 487.0,320.82 487.5,320.77 488.0,320.73 488.5,320.68 489.0,320.63 489.5,320.59 490.0,320.54 490.5,320.50 491.0,320.45 491.5,320.41 492.0,320.36 492.5,320.32 493.0,320.27 493.5,320.23 494.0,320.18 494.5,320.14 495.0,320.09 495.5,320.05 496.0,320.00 496.5,319.96 497.0,319.92 497.5,319.87 498.0,319.83 498.5,319.79 499.0,319.74 499.5,319.70 500.0,319.66 500.5,319.62 501.0,319.57 501.5,319.53 502.0,319.49 502.5,319.45 503.0,319.41 503.5,319.36 504.0,319.32 504.5,319.28 505.0,319.24 505.5,319.20 506.0,319.16 506.5,319.12 507.0,319.08 507.5,319.04 508.0,319.00 508.5,318.96 509.0,318.92 509.5,318.88 510.0,318.84 510.5,318.80 511.0,318.76 511.5,318.72 512.0,318.68 512.5,318.64 513.0,318.60 513.5,318.56 514.0,318.53 514.5,318.49 515.0,318.45 515.5,318.41 516.0,318.37 516.5,318.34 517.0,318.30 517.5,318.26 518.0,318.22 518.5,318.19 519.0,318.15 519.5,318.11" fill="none" stroke="#8c8c20" stroke-width="1.6"/>
<polyline points="55.5,487.10 56.0,487.10 56.5,487.10 57.0,487.10 57.5,487.10 58.0,487.10 58.5,487.10 59.0,487.10 59.5,487.10 60.0,487.10 60.5,487.10 61.0,487.10 61.5,487.10 62.0,487.10 62.5,487.10 63.0,487.10 63.5,487.10 64.0,487.10 64.5,487.10 65.0,487.10 65.5,487.10 66.0,487.10 66.5,487.10 67.0,487.10 67.5,487.10 68.0,487.10 68.5,487.10 69.0,487.10 69.5,487.10 70.0,487.10 70.5,487.10 71.0,487.10 71.5,487.10 72.0,487.10 72.5,487.10 73.0,487.10 73.5,487.10 74.0,487.10 74.5,487.10 75.0,487.10 75.5,487.10 76.0,487.10 76.5,487.10 77.0,487.10 77.5,487.10 78.0,487.10 78.5,487.10 79.0,487.10 79.5,487.10 80.0,487.10 80.5,487.10 81.0,487.10 81.5,487.10 82.0,487.10 82.5,487.10 83.0,487.10 83.5,487.10 84.0,487.10 84.5,487.10 85.0,487.10 85.5,487.10 86.0,487.10 86.5,487.10 87.0,487.10 87.5,487.10 88.0,487.10 88.5,487.10 89.0,487.10 89.5,487.10 90.0,487.10 90.5,487.10 91.0,487.10 91.5,487.10 92.0,487.10 92.5,487.10 93.0,487.10 93.5,487.10 94.0,487.10 94.5,487.10 95.0,487.10 95.5,487.10 96.0,487.10 96.5,487.10 97.0,487.10 97.5,487.10 98.0,487.10 98.5,487.10 99.0,487.10 99.5,487.10 100.0,486.58 100.5,485.90 101.0,485.22 101.5,484.55 102.0,483.87 102.5,483.20 103.0,482.54 103.5,481.87 104.0,481.21 104.5,480.55 105.0,479.89 105.5,479.23 106.0,478.58 106.5,477.93 107.0,477.28 107.5,476.64 108.0,476.00 108.5,475.35 109.0,474.72 109.5,474.08 110.0,473.45 110.5,472.82 111.0,472.19 111.5,471.56 112.0,470.94 112.5,470.32 113.0,469.70 113.5,469.09 114.0,468.47 114.5,467.86 115.0,467.25 115.5,466.64 116.0,466.04 116.5,465.44 117.0,464.84 117.5,464.24 118.0,463.65 118.5,463.05 119.0,462.46 119.5,461.87 120.0,461.29 120.5,460.70 121.0,460.12 121.5,459.54 122.0,458.97 122.5,458.39 123.0,457.82 123.5,457.25 124.0,456.68 124.5,456.11 125.0,455.55 125.5,454.99 126.0,454.43 126.5,453.87 127.0,453.32 127.5,452.76 128.0,452.21 128.5,451.66 129.0,451.11 129.5,450.57 130.0,450.03 130.5,449.49 131.0,448.95 131.5,448.41 132.0,447.88 132.5,447.35 133.0,446.81 133.5,446.29 134.0,445.76 134.5,445.24 135.0,444.71 135.5,444.19 136.0,443.68 136.5,443.16 137.0,442.64 137.5,442.13 138.0,441.62 138.5,441.11 139.0,440.61 139.5,440.10 140.0,439.60 140.5,439.10 141.0,438.60 141.5,438.10 142.0,437.61 142.5,437.12 143.0,436.63 143.5,436.14 144.0,435.65 144.5,435.16 145.0,434.68 145.5,434.20 146.0,433.72 146.5,433.24 147.0,432.76 147.5,432.29 148.0,431.82 148.5,431.35 149.0,430.88 149.5,430.41 150.0,429.95 150.5,429.48 151.0,429.02 151.5,428.56 152.0,428.10 152.5,427.65 153.0,427.19 153.5,426.74 154.0,426.29 154.5,425.84 155.0,425.39 155.5,424.94 156.0,424.50 156.5,424.06 157.0,423.62 157.5,423.18 158.0,422.74 158.5,422.30 159.0,421.87 159.5,421.44 160.0,421.01 160.5,420.58 161.0,420.15 161.5,419.72 162.0,419.30 162.5,418.88 163.0,418.46 163.5,418.04 164.0,417.62 164.5,417.20 165.0,416.79 165.5,416.37 166.0,415.96 166.5,415.55 167.0,415.14 167.5,414.74 168.0,414.33 168.5,413.93 169.0,413.53 169.5,413.13 170.0,412.73 170.5,412.33 171.0,411.93 171.5,411.54 172.0,411.15 172.5,410.76 173.0,410.37 173.5,409.98 174.0,409.59 174.5,409.21 175.0,408.82 175.5,408.44 176.0,408.06 176.5,407.68 177.0,407.30 177.5,406.92 178.0,406.55 178.5,406.18 179.0,405.80 179.5,405.43 180.0,405.06 180.5,404.69 181.0,404.33 181.5,403.96 182.0,403.60 182.5,403.24 183.0,402.88 183.5,402.52 184.0,402.16 184.5,401.80 185.0,401.45 185.5,401.09 186.0,400.74 186.5,400.39 187.0,400.04 187.5,399.69 188.0,399.34 188.5,399.00 189.0,398.65 189.5,398.31 190.0,397.97 190.5,397.62 191.0,397.29 191.5,396.95 192.0,396.61 192.5,396.27 193.0,395.94 193.5,395.61 194.0,395.28 194.5,394.95 195.0,394.62 195.5,394.29 196.0,393.96 196.5,393.64 197.0,393.31 197.5,392.99 198.0,392.67 198.5,392.35 199.0,392.03 199.5,391.71 200.0,391.39 200.5,391.08 201.0,390.76 201.5,390.45 202.0,390.14 202.5,389.83 203.0,389.52 203.5,389.21 204.0,388.90 204.5,388.60 205.0,388.29 205.5,387.99 206.0,387.69 206.5,387.38 207.0,387.08 207.5,386.79 208.0,386.49 208.5,386.19 209.0,385.90 209.5,385.60 210.0,385.31 210.5,385.02 211.0,384.72 211.5,384.43 212.0,384.15 212.5,383.86 213.0,383.57 213.5,383.29 214.0,383.00 214.5,382.72 215.0,382.44 215.5,382.16 216.0,381.87 216.5,381.60 217.0,381.32 217.5,381.04 218.0,380.77 218.5,380.49 219.0,380.22 219.5,379.94 220.0,379.67 220.5,379.40 221.0,379.13 221.5,378.86 222.0,378.60 222.5,378.33 223.0,378.07 223.5,377.80 224.0,377.54 224.5,377.28 225.0,377.01 225.5,376.75 226.0,376.49 226.5,376.24 227.0,375.98 227.5,375.72 228.0,375.47 228.5,375.21 229.0,374.96 229.5,374.71 230.0,374.46 230.5,374.20 231.0,373.96 231.5,373.71 232.0,373.46 232.5,373.21 233.0,372.97 233.5,372.72 234.0,372.48 234.5,372.23 235.0,371.99 235.5,371.75 236.0,371.51 236.5,371.27 237.0,371.03 237.5,370.80 238.0,370.56 238.5,370.32 239.0,370.09 239.5,369.86 240.0,369.62 240.5,369.39 241.0,369.16 241.5,368.93 242.0,368.70 242.5,368.47 243.0,368.25 243.5,368.02 244.0,367.79 244.5,367.57 245.0,367.34 245.5,367.12 246.0,366.90 246.5,366.68 247.0,366.46 247.5,366.24 248.0,366.02 248.5,365.80 249.0,365.58 249.5,365.37 250.0,365.15 250.5,364.94 251.0,364.72 251.5,364.51 252.0,364.30 252.5,364.08 253.0,363.87 253.5,363.66 254.0,363.45 254.5,363.25 255.0,363.04 255.5,362.83 256.0,362.63 256.5,362.42 257.0,362.22 257.5,362.01 258.0,361.81 258.5,361.61 259.0,361.41 259.5,361.21 260.0,361.01 260.5,360.81 261.0,360.61 261.5,360.41 262.0,360.22 262.5,360.02 263.0,359.83 263.5,359.63 264.0,359.44 264.5,359.24 265.0,359.05 265.5,358.86 266.0,358.67 266.5,358.48 267.0,358.29 267.5,358.10 268.0,357.92 268.5,357.73 269.0,357.54 269.5,357.36 270.0,357.17 270.5,356.99 271.0,356.80 271.5,356.62 272.0,356.44 272.5,356.26 273.0,356.08 273.5,355.90 274.0,355.72 274.5,355.54 275.0,355.36 275.5,355.18 276.0,355.01 276.5,354.83 277.0,354.66 277.5,354.48 278.0,354.31 278.5,354.14 279.0,353.96 279.5,353.79 280.0,353.62 280.5,353.45 281.0,353.28 281.5,353.11 282.0,352.94 282.5,352.77 283.0,352.61 283.5,352.44 284.0,352.27 284.5,352.11 285.0,351.94 285.5,351.78 286.0,351.62 286.5,351.45 287.0,351.29 287.5,351.13 288.0,350.97 288.5,350.81 289.0,350.65 289.5,350.49 290.0,350.33 290.5,350.17 291.0,350.02 291.5,349.86 292.0,349.70 292.5,349.55 293.0,349.39 293.5,349.24 294.0,349.08 294.5,348.93 295.0,348.78 295.5,348.63 296.0,348.48 296.5,348.33 297.0,348.17 297.5,348.03 298.0,347.88 298.5,347.73 299.0,347.58 299.5,347.43 300.0,347.29 300.5,347.14 301.0,346.99 301.5,346.85 302.0,346.70 302.5,346.56 303.0,346.42 303.5,346.27 304.0,346.13 304.5,345.99 305.0,345.85 305.5,345.71 306.0,345.57 306.5,345.43 307.0,345.29 307.5,345.15 308.0,345.01 308.5,344.88 309.0,344.74 309.5,344.60 310.0,344.47 310.5,344.33 311.0,344.20 311.5,344.06 312.0,343.93 312.5,343.79 313.0,343.66 313.5,343.53 314.0,343.40 314.5,343.27 315.0,343.14 315.5,343.01 316.0,342.88 316.5,342.75 317.0,342.62 317.5,342.49 318.0,342.36 318.5,342.23 319.0,342.11 319.5,341.98 320.0,341.85 320.5,341.73 321.0,341.60 321.5,341.48 322.0,341.36 322.5,341.23 323.0,341.11 323.5,340.99 324.0,340.87 324.5,340.74 325.0,340.62 325.5,340.50 326.0,340.38 326.5,340.26 327.0,340.14 327.5,340.02 328.0,339.91 328.5,339.79 329.0,339.67 329.5,339.55 330.0,339.44 330.5,339.32 331.0,339.21 331.5,339.09 332.0,338.98 332.5,338.86 333.0,338.75 333.5,338.63 334.0,338.52 334.5,338.41 335.0,338.30 335.5,338.18 336.0,338.07 336.5,337.96 337.0,337.85 337.5,337.74 338.0,337.63 338.5,337.52 339.0,337.41 339.5,337.31 340.0,337.20 340.5,337.09 341.0,336.98 341.5,336.88 342.0,336.77 342.5,336.67 343.0,336.56 343.5,336.45 344.0,336.35 344.5,336.25 345.0,336.14 345.5,336.04 346.0,335.94 346.5,335.83 347.0,335.73 347.5,335.63 348.0,335.53 348.5,335.43 349.0,335.33 349.5,335.23 350.0,335.13 350.5,335.03 351.0,334.93 351.5,334.83 352.0,334.73 352.5,334.63 353.0,334.53 353.5,334.44 354.0,334.34 354.5,334.24 355.0,334.15 355.5,334.05 356.0,333.96 356.5,333.86 357.0,333.77 357.5,333.67 358.0,333.58 358.5,333.48 359.0,333.39 359.5,333.30 360.0,333.21 360.5,333.11 361.0,333.02 361.5,332.93 362.0,332.84 362.5,332.75 363.0,332.66 363.5,332.57 364.0,332.48 364.5,332.39 365.0,332.30 365.5,332.21 366.0,332.12 366.5,332.04 367.0,331.95 367.5,331.86 368.0,331.77 368.5,331.69 369.0,331.60 369.5,331.51 370.0,331.43 370.5,331.34 371.0,331.26 371.5,331.17 372.0,331.09 372.5,331.01 373.0,330.92 373.5,330.84 374.0,330.76 374.5,330.67 375.0,330.59 375.5,330.51 376.0,330.43 376.5,330.34 377.0,330.26 377.5,330.18 378.0,330.10 378.5,330.02 379.0,329.94 379.5,329.86 380.0,329.78 380.5,329.70 381.0,329.63 381.5,329.55 382.0,329.47 382.5,329.39 383.0,329.31 383.5,329.24 384.0,329.16 384.5,329.08 385.0,329.01 385.5,328.93 386.0,328.85 386.5,328.78 387.0,328.70 387.5,328.63 388.0,328.55 388.5,328.48 389.0,328.41 389.5,328.33 390.0,328.26 390.5,328.19 391.0,328.11 391.5,328.04 392.0,327.97 392.5,327.90 393.0,327.82 393.5,327.75 394.0,327.68 394.5,327.61 395.0,327.54 395.5,327.47 396.0,327.40 396.5,327.33 397.0,327.26 397.5,327.19 398.0,327.12 398.5,327.05 399.0,326.98 399.5,326.92 400.0,326.85 400.5,326.78 401.0,326.71 401.5,326.65 402.0,326.58 402.5,326.51 403.0,326.45 403.5,326.38 404.0,326.31 404.5,326.25 405.0,326.18 405.5,326.12 406.0,326.05 406.5,325.99 407.0,325.92 407.5,325.86 408.0,325.79 408.5,325.73 409.0,325.67 409.5,325.60 410.0,325.54 410.5,325.48 411.0,325.42 411.5,325.35 412.0,325.29 412.5,325.23 413.0,325.17 413.5,325.11 414.0,325.05 414.5,324.99 415.0,324.92 415.5,324.86 416.0,324.80 416.5,324.74 417.0,324.68 417.5,324.63 418.0,324.57 418.5,324.51 419.0,324.45 419.5,324.39" fill="none" stroke="#3a3a08" stroke-width="0.9" stroke-dasharray="1.5,1.2" opacity="0.55"/>
<polyline points="55.5,487.10 56.0,487.10 56.5,487.10 57.0,487.10 57.5,487.10 58.0,487.10 58.5,487.10 59.0,487.10 59.5,487.10 60.0,487.10 60.5,487.10 61.0,487.10 61.5,487.10 62.0,487.10 62.5,487.10 63.0,487.10 63.5,487.10 64.0,487.10 64.5,487.10 65.0,487.10 65.5,487.10 66.0,487.10 66.5,487.10 67.0,487.10 67.5,487.10 68.0,487.10 68.5,487.10 69.0,487.10 69.5,487.10 70.0,487.10 70.5,487.10 71.0,487.10 71.5,487.10 72.0,487.10 72.5,487.10 73.0,487.10 73.5,487.10 74.0,487.10 74.5,487.10 75.0,487.10 75.5,487.10 76.0,487.10 76.5,487.10 77.0,487.10 77.5,487.10 78.0,487.10 78.5,487.10 79.0,487.10 79.5,487.10 80.0,487.10 80.5,487.10 81.0,487.10 81.5,487.10 82.0,487.10 82.5,487.10 83.0,487.10 83.5,487.10 84.0,487.10 84.5,487.10 85.0,487.10 85.5,487.10 86.0,487.10 86.5,487.10 87.0,487.10 87.5,487.10 88.0,487.10 88.5,487.10 89.0,487.10 89.5,487.10 90.0,487.10 90.5,487.10 91.0,487.10 91.5,487.10 92.0,487.10 92.5,487.10 93.0,487.10 93.5,486.58 94.0,485.89 94.5,485.22 95.0,484.54 95.5,483.87 96.0,483.20 96.5,482.53 97.0,481.86 97.5,481.20 98.0,480.54 98.5,479.88 99.0,479.23 99.5,478.58 100.0,477.92 100.5,477.28 101.0,476.63 101.5,475.99 102.0,475.35 102.5,474.71 103.0,474.08 103.5,473.44 104.0,472.81 104.5,472.18 105.0,471.56 105.5,470.94 106.0,470.31 106.5,469.70 107.0,469.08 107.5,468.47 108.0,467.85 108.5,467.25 109.0,466.64 109.5,466.03 110.0,465.43 110.5,464.83 111.0,464.24 111.5,463.64 112.0,463.05 112.5,462.46 113.0,461.87 113.5,461.28 114.0,460.70 114.5,460.12 115.0,459.54 115.5,458.96 116.0,458.39 116.5,457.81 117.0,457.24 117.5,456.67 118.0,456.11 118.5,455.54 119.0,454.98 119.5,454.42 120.0,453.87 120.5,453.31 121.0,452.76 121.5,452.21 122.0,451.66 122.5,451.11 123.0,450.57 123.5,450.02 124.0,449.48 124.5,448.94 125.0,448.41 125.5,447.87 126.0,447.34 126.5,446.81 127.0,446.28 127.5,445.76 128.0,445.23 128.5,444.71 129.0,444.19 129.5,443.67 130.0,443.15 130.5,442.64 131.0,442.13 131.5,441.62 132.0,441.11 132.5,440.60 133.0,440.10 133.5,439.60 134.0,439.10 134.5,438.60 135.0,438.10 135.5,437.61 136.0,437.11 136.5,436.62 137.0,436.13 137.5,435.65 138.0,435.16 138.5,434.68 139.0,434.19 139.5,433.71 140.0,433.24 140.5,432.76 141.0,432.29 141.5,431.81 142.0,431.34 142.5,430.87 143.0,430.41 143.5,429.94 144.0,429.48 144.5,429.02 145.0,428.56 145.5,428.10 146.0,427.64 146.5,427.19 147.0,426.73 147.5,426.28 148.0,425.83 148.5,425.39 149.0,424.94 149.5,424.50 150.0,424.05 150.5,423.61 151.0,423.17 151.5,422.74 152.0,422.30 152.5,421.87 153.0,421.43 153.5,421.00 154.0,420.57 154.5,420.15 155.0,419.72 155.5,419.30 156.0,418.87 156.5,418.45 157.0,418.03 157.5,417.61 158.0,417.20 158.5,416.78 159.0,416.37 159.5,415.96 160.0,415.55 160.5,415.14 161.0,414.73 161.5,414.33 162.0,413.93 162.5,413.52 163.0,413.12 163.5,412.72 164.0,412.33 164.5,411.93 165.0,411.54 165.5,411.14 166.0,410.75 166.5,410.36 167.0,409.97 167.5,409.59 168.0,409.20 168.5,408.82 169.0,408.44 169.5,408.06 170.0,407.68 170.5,407.30 171.0,406.92 171.5,406.55 172.0,406.17 172.5,405.80 173.0,405.43 173.5,405.06 174.0,404.69 174.5,404.33 175.0,403.96 175.5,403.60 176.0,403.23 176.5,402.87 177.0,402.51 177.5,402.16 178.0,401.80 178.5,401.44 179.0,401.09 179.5,400.74 180.0,400.38 180.5,400.03 181.0,399.69 181.5,399.34 182.0,398.99 182.5,398.65 183.0,398.30 183.5,397.96 184.0,397.62 184.5,397.28 185.0,396.94 185.5,396.61 186.0,396.27 186.5,395.94 187.0,395.60 187.5,395.27 188.0,394.94 188.5,394.61 189.0,394.29 189.5,393.96 190.0,393.63 190.5,393.31 191.0,392.99 191.5,392.66 192.0,392.34 192.5,392.03 193.0,391.71 193.5,391.39 194.0,391.07 194.5,390.76 195.0,390.45 195.5,390.14 196.0,389.82 196.5,389.52 197.0,389.21 197.5,388.90 198.0,388.59 198.5,388.29 199.0,387.99 199.5,387.68 200.0,387.38 200.5,387.08 201.0,386.78 201.5,386.49 202.0,386.19 202.5,385.89 203.0,385.60 203.5,385.31 204.0,385.01 204.5,384.72 205.0,384.43 205.5,384.14 206.0,383.86 206.5,383.57 207.0,383.28 207.5,383.00 208.0,382.72 208.5,382.43 209.0,382.15 209.5,381.87 210.0,381.59 210.5,381.32 211.0,381.04 211.5,380.76 212.0,380.49 212.5,380.21 213.0,379.94 213.5,379.67 214.0,379.40 214.5,379.13 215.0,378.86 215.5,378.59 216.0,378.33 216.5,378.06 217.0,377.80 217.5,377.54 218.0,377.27 218.5,377.01 219.0,376.75 219.5,376.49 220.0,376.23 220.5,375.98 221.0,375.72 221.5,375.46 222.0,375.21 222.5,374.96 223.0,374.70 223.5,374.45 224.0,374.20 224.5,373.95 225.0,373.70 225.5,373.46 226.0,373.21 226.5,372.96 227.0,372.72 227.5,372.48 228.0,372.23 228.5,371.99 229.0,371.75 229.5,371.51 230.0,371.27 230.5,371.03 231.0,370.79 231.5,370.56 232.0,370.32 232.5,370.09 233.0,369.85 233.5,369.62 234.0,369.39 234.5,369.16 235.0,368.93 235.5,368.70 236.0,368.47 236.5,368.24 237.0,368.02 237.5,367.79 238.0,367.57 238.5,367.34 239.0,367.12 239.5,366.90 240.0,366.67 240.5,366.45 241.0,366.23 241.5,366.02 242.0,365.80 242.5,365.58 243.0,365.36 243.5,365.15 244.0,364.93 244.5,364.72 245.0,364.51 245.5,364.29 246.0,364.08 246.5,363.87 247.0,363.66 247.5,363.45 248.0,363.24 248.5,363.04 249.0,362.83 249.5,362.62 250.0,362.42 250.5,362.22 251.0,362.01 251.5,361.81 252.0,361.61 252.5,361.41 253.0,361.21 253.5,361.01 254.0,360.81 254.5,360.61 255.0,360.41 255.5,360.21 256.0,360.02 256.5,359.82 257.0,359.63 257.5,359.44 258.0,359.24 258.5,359.05 259.0,358.86 259.5,358.67 260.0,358.48 260.5,358.29 261.0,358.10 261.5,357.91 262.0,357.73 262.5,357.54 263.0,357.35 263.5,357.17 264.0,356.99 264.5,356.80 265.0,356.62 265.5,356.44 266.0,356.26 266.5,356.08 267.0,355.90 267.5,355.72 268.0,355.54 268.5,355.36 269.0,355.18 269.5,355.01 270.0,354.83 270.5,354.66 271.0,354.48 271.5,354.31 272.0,354.13 272.5,353.96 273.0,353.79 273.5,353.62 274.0,353.45 274.5,353.28 275.0,353.11 275.5,352.94 276.0,352.77 276.5,352.61 277.0,352.44 277.5,352.27 278.0,352.11 278.5,351.94 279.0,351.78 279.5,351.61 280.0,351.45 280.5,351.29 281.0,351.13 281.5,350.97 282.0,350.81 282.5,350.65 283.0,350.49 283.5,350.33 284.0,350.17 284.5,350.01 285.0,349.86 285.5,349.70 286.0,349.55 286.5,349.39 287.0,349.24 287.5,349.08 288.0,348.93 288.5,348.78 289.0,348.63 289.5,348.47 290.0,348.32 290.5,348.17 291.0,348.02 291.5,347.87 292.0,347.73 292.5,347.58 293.0,347.43 293.5,347.28 294.0,347.14 294.5,346.99 295.0,346.85 295.5,346.70 296.0,346.56 296.5,346.42 297.0,346.27 297.5,346.13 298.0,345.99 298.5,345.85 299.0,345.71 299.5,345.57 300.0,345.43 300.5,345.29 301.0,345.15 301.5,345.01 302.0,344.87 302.5,344.74 303.0,344.60 303.5,344.46 304.0,344.33 304.5,344.19 305.0,344.06 305.5,343.93 306.0,343.79 306.5,343.66 307.0,343.53 307.5,343.40 308.0,343.26 308.5,343.13 309.0,343.00 309.5,342.87 310.0,342.74 310.5,342.62 311.0,342.49 311.5,342.36 312.0,342.23 312.5,342.11 313.0,341.98 313.5,341.85 314.0,341.73 314.5,341.60 315.0,341.48 315.5,341.36 316.0,341.23 316.5,341.11 317.0,340.99 317.5,340.86 318.0,340.74 318.5,340.62 319.0,340.50 319.5,340.38 320.0,340.26 320.5,340.14 321.0,340.02 321.5,339.90 322.0,339.79 322.5,339.67 323.0,339.55 323.5,339.44 324.0,339.32 324.5,339.20 325.0,339.09 325.5,338.97 326.0,338.86 326.5,338.75 327.0,338.63 327.5,338.52 328.0,338.41 328.5,338.30 329.0,338.18 329.5,338.07 330.0,337.96 330.5,337.85 331.0,337.74 331.5,337.63 332.0,337.52 332.5,337.41 333.0,337.31 333.5,337.20 334.0,337.09 334.5,336.98 335.0,336.88 335.5,336.77 336.0,336.66 336.5,336.56 337.0,336.45 337.5,336.35 338.0,336.24 338.5,336.14 339.0,336.04 339.5,335.93 340.0,335.83 340.5,335.73 341.0,335.63 341.5,335.53 342.0,335.43 342.5,335.32 343.0,335.22 343.5,335.12 344.0,335.03 344.5,334.93 345.0,334.83 345.5,334.73 346.0,334.63 346.5,334.53 347.0,334.44 347.5,334.34 348.0,334.24 348.5,334.15 349.0,334.05 349.5,333.96 350.0,333.86 350.5,333.77 351.0,333.67 351.5,333.58 352.0,333.48 352.5,333.39 353.0,333.30 353.5,333.21 354.0,333.11 354.5,333.02 355.0,332.93 355.5,332.84 356.0,332.75 356.5,332.66 357.0,332.57 357.5,332.48 358.0,332.39 358.5,332.30 359.0,332.21 359.5,332.12 360.0,332.03 360.5,331.95 361.0,331.86 361.5,331.77 362.0,331.69 362.5,331.60 363.0,331.51 363.5,331.43 364.0,331.34 364.5,331.26 365.0,331.17 365.5,331.09 366.0,331.00 366.5,330.92 367.0,330.84 367.5,330.75 368.0,330.67 368.5,330.59 369.0,330.51 369.5,330.43 370.0,330.34 370.5,330.26 371.0,330.18 371.5,330.10 372.0,330.02 372.5,329.94 373.0,329.86 373.5,329.78 374.0,329.70 374.5,329.62 375.0,329.55 375.5,329.47 376.0,329.39 376.5,329.31 377.0,329.24 377.5,329.16 378.0,329.08 378.5,329.01 379.0,328.93 379.5,328.85 380.0,328.78 380.5,328.70 381.0,328.63 381.5,328.55 382.0,328.48 382.5,328.41 383.0,328.33 383.5,328.26 384.0,328.19 384.5,328.11 385.0,328.04 385.5,327.97 386.0,327.90 386.5,327.82 387.0,327.75 387.5,327.68 388.0,327.61 388.5,327.54 389.0,327.47 389.5,327.40 390.0,327.33 390.5,327.26 391.0,327.19 391.5,327.12 392.0,327.05 392.5,326.98 393.0,326.92 393.5,326.85 394.0,326.78 394.5,326.71 395.0,326.64 395.5,326.58 396.0,326.51 396.5,326.44 397.0,326.38 397.5,326.31 398.0,326.25 398.5,326.18 399.0,326.12 399.5,326.05 400.0,325.99 400.5,325.92 401.0,325.86 401.5,325.79 402.0,325.73 402.5,325.67 403.0,325.60 403.5,325.54 404.0,325.48 404.5,325.42 405.0,325.35 405.5,325.29 406.0,325.23 406.5,325.17 407.0,325.11 407.5,325.05 408.0,324.98 408.5,324.92 409.0,324.86 409.5,324.80 410.0,324.74 410.5,324.68 411.0,324.62 411.5,324.57 412.0,324.51 412.5,324.45 413.0,324.39 413.5,324.33 414.0,324.27 414.5,324.21 415.0,324.16 415.5,324.10 416.0,324.04 416.5,323.99 417.0,323.93 417.5,323.87 418.0,323.82 418.5,323.76 419.0,323.70 419.5,323.65" fill="none" stroke="#3a3a08" stroke-width="0.9" stroke-dasharray="1.5,1.2" opacity="0.45"/>
<polyline points="55.5,487.10 56.0,487.10 56.5,487.10 57.0,487.10 57.5,487.10 58.0,487.10 58.5,487.10 59.0,487.10 59.5,487.10 60.0,487.10 60.5,487.10 61.0,487.10 61.5,487.10 62.0,487.10 62.5,487.10 63.0,487.10 63.5,487.10 64.0,487.10 64.5,487.10 65.0,487.10 65.5,487.10 66.0,487.10 66.5,487.10 67.0,487.10 67.5,487.10 68.0,487.10 68.5,487.10 69.0,487.10 69.5,487.10 70.0,487.10 70.5,487.10 71.0,487.10 71.5,487.10 72.0,487.10 72.5,487.10 73.0,487.10 73.5,487.10 74.0,487.10 74.5,487.10 75.0,487.10 75.5,487.10 76.0,487.10 76.5,487.10 77.0,487.10 77.5,487.10 78.0,487.10 78.5,487.10 79.0,487.10 79.5,487.10 80.0,487.10 80.5,487.10 81.0,487.10 81.5,487.10 82.0,487.10 82.5,487.10 83.0,487.10 83.5,487.10 84.0,487.10 84.5,487.10 85.0,487.10 85.5,487.10 86.0,487.10 86.5,487.10 87.0,487.10 87.5,487.10 88.0,487.10 88.5,487.10 89.0,487.10 89.5,487.10 90.0,487.10 90.5,487.10 91.0,487.10 91.5,487.10 92.0,487.10 92.5,487.10 93.0,487.10 93.5,487.10 94.0,487.10 94.5,487.10 95.0,487.10 95.5,487.10 96.0,487.10 96.5,487.10 97.0,487.10 97.5,487.10 98.0,487.10 98.5,487.10 99.0,487.10 99.5,487.10 100.0,487.10 100.5,487.10 101.0,487.10 101.5,487.10 102.0,487.10 102.5,487.10 103.0,487.10 103.5,487.10 104.0,487.10 104.5,487.10 105.0,487.10 105.5,487.10 106.0,487.10 106.5,487.10 107.0,487.10 107.5,487.10 108.0,486.55 108.5,485.87 109.0,485.19 109.5,484.51 110.0,483.84 110.5,483.17 111.0,482.50 111.5,481.84 112.0,481.17 112.5,480.51 113.0,479.86 113.5,479.20 114.0,478.55 114.5,477.90 115.0,477.25 115.5,476.61 116.0,475.96 116.5,475.32 117.0,474.68 117.5,474.05 118.0,473.42 118.5,472.79 119.0,472.16 119.5,471.53 120.0,470.91 120.5,470.29 121.0,469.67 121.5,469.05 122.0,468.44 122.5,467.83 123.0,467.22 123.5,466.61 124.0,466.01 124.5,465.41 125.0,464.81 125.5,464.21 126.0,463.62 126.5,463.02 127.0,462.43 127.5,461.84 128.0,461.26 128.5,460.67 129.0,460.09 129.5,459.51 130.0,458.94 130.5,458.36 131.0,457.79 131.5,457.22 132.0,456.65 132.5,456.08 133.0,455.52 133.5,454.96 134.0,454.40 134.5,453.84 135.0,453.29 135.5,452.73 136.0,452.18 136.5,451.63 137.0,451.09 137.5,450.54 138.0,450.00 138.5,449.46 139.0,448.92 139.5,448.38 140.0,447.85 140.5,447.32 141.0,446.79 141.5,446.26 142.0,445.73 142.5,445.21 143.0,444.69 143.5,444.17 144.0,443.65 144.5,443.13 145.0,442.62 145.5,442.11 146.0,441.60 146.5,441.09 147.0,440.58 147.5,440.08 148.0,439.58 148.5,439.07 149.0,438.58 149.5,438.08 150.0,437.58 150.5,437.09 151.0,436.60 151.5,436.11 152.0,435.62 152.5,435.14 153.0,434.66 153.5,434.17 154.0,433.69 154.5,433.22 155.0,432.74 155.5,432.27 156.0,431.79 156.5,431.32 157.0,430.85 157.5,430.39 158.0,429.92 158.5,429.46 159.0,429.00 159.5,428.54 160.0,428.08 160.5,427.62 161.0,427.17 161.5,426.72 162.0,426.26 162.5,425.82 163.0,425.37 163.5,424.92 164.0,424.48 164.5,424.03 165.0,423.59 165.5,423.15 166.0,422.72 166.5,422.28 167.0,421.85 167.5,421.42 168.0,420.98 168.5,420.56 169.0,420.13 169.5,419.70 170.0,419.28 170.5,418.86 171.0,418.43 171.5,418.01 172.0,417.60 172.5,417.18 173.0,416.77 173.5,416.35 174.0,415.94 174.5,415.53 175.0,415.12 175.5,414.72 176.0,414.31 176.5,413.91 177.0,413.51 177.5,413.11 178.0,412.71 178.5,412.31 179.0,411.91 179.5,411.52 180.0,411.13 180.5,410.74 181.0,410.35 181.5,409.96 182.0,409.57 182.5,409.19 183.0,408.80 183.5,408.42 184.0,408.04 184.5,407.66 185.0,407.28 185.5,406.91 186.0,406.53 186.5,406.16 187.0,405.78 187.5,405.41 188.0,405.04 188.5,404.68 189.0,404.31 189.5,403.94 190.0,403.58 190.5,403.22 191.0,402.86 191.5,402.50 192.0,402.14 192.5,401.78 193.0,401.43 193.5,401.07 194.0,400.72 194.5,400.37 195.0,400.02 195.5,399.67 196.0,399.32 196.5,398.98 197.0,398.63 197.5,398.29 198.0,397.95 198.5,397.61 199.0,397.27 199.5,396.93 200.0,396.59 200.5,396.26 201.0,395.92 201.5,395.59 202.0,395.26 202.5,394.93 203.0,394.60 203.5,394.27 204.0,393.95 204.5,393.62 205.0,393.30 205.5,392.97 206.0,392.65 206.5,392.33 207.0,392.01 207.5,391.69 208.0,391.38 208.5,391.06 209.0,390.75 209.5,390.43 210.0,390.12 210.5,389.81 211.0,389.50 211.5,389.19 212.0,388.89 212.5,388.58 213.0,388.28 213.5,387.97 214.0,387.67 214.5,387.37 215.0,387.07 215.5,386.77 216.0,386.47 216.5,386.18 217.0,385.88 217.5,385.59 218.0,385.29 218.5,385.00 219.0,384.71 219.5,384.42 220.0,384.13 220.5,383.84 221.0,383.56 221.5,383.27 222.0,382.99 222.5,382.70 223.0,382.42 223.5,382.14 224.0,381.86 224.5,381.58 225.0,381.30 225.5,381.03 226.0,380.75 226.5,380.48 227.0,380.20 227.5,379.93 228.0,379.66 228.5,379.39 229.0,379.12 229.5,378.85 230.0,378.58 230.5,378.32 231.0,378.05 231.5,377.79 232.0,377.52 232.5,377.26 233.0,377.00 233.5,376.74 234.0,376.48 234.5,376.22 235.0,375.97 235.5,375.71 236.0,375.45 236.5,375.20 237.0,374.95 237.5,374.69 238.0,374.44 238.5,374.19 239.0,373.94 239.5,373.69 240.0,373.45 240.5,373.20 241.0,372.95 241.5,372.71 242.0,372.47 242.5,372.22 243.0,371.98 243.5,371.74 244.0,371.50 244.5,371.26 245.0,371.02 245.5,370.78 246.0,370.55 246.5,370.31 247.0,370.08 247.5,369.84 248.0,369.61 248.5,369.38 249.0,369.15 249.5,368.92 250.0,368.69 250.5,368.46 251.0,368.23 251.5,368.01 252.0,367.78 252.5,367.56 253.0,367.33 253.5,367.11 254.0,366.89 254.5,366.67 255.0,366.45 255.5,366.23 256.0,366.01 256.5,365.79 257.0,365.57 257.5,365.35 258.0,365.14 258.5,364.92 259.0,364.71 259.5,364.50 260.0,364.29 260.5,364.07 261.0,363.86 261.5,363.65 262.0,363.44 262.5,363.24 263.0,363.03 263.5,362.82 264.0,362.62 264.5,362.41 265.0,362.21 265.5,362.00 266.0,361.80 266.5,361.60 267.0,361.40 267.5,361.20 268.0,361.00 268.5,360.80 269.0,360.60 269.5,360.40 270.0,360.21 270.5,360.01 271.0,359.82 271.5,359.62 272.0,359.43 272.5,359.24 273.0,359.04 273.5,358.85 274.0,358.66 274.5,358.47 275.0,358.28 275.5,358.09 276.0,357.91 276.5,357.72 277.0,357.53 277.5,357.35 278.0,357.16 278.5,356.98 279.0,356.79 279.5,356.61 280.0,356.43 280.5,356.25 281.0,356.07 281.5,355.89 282.0,355.71 282.5,355.53 283.0,355.35 283.5,355.18 284.0,355.00 284.5,354.82 285.0,354.65 285.5,354.47 286.0,354.30 286.5,354.13 287.0,353.95 287.5,353.78 288.0,353.61 288.5,353.44 289.0,353.27 289.5,353.10 290.0,352.93 290.5,352.77 291.0,352.60 291.5,352.43 292.0,352.27 292.5,352.10 293.0,351.94 293.5,351.77 294.0,351.61 294.5,351.45 295.0,351.28 295.5,351.12 296.0,350.96 296.5,350.80 297.0,350.64 297.5,350.48 298.0,350.32 298.5,350.17 299.0,350.01 299.5,349.85 300.0,349.70 300.5,349.54 301.0,349.39 301.5,349.23 302.0,349.08 302.5,348.92 303.0,348.77 303.5,348.62 304.0,348.47 304.5,348.32 305.0,348.17 305.5,348.02 306.0,347.87 306.5,347.72 307.0,347.57 307.5,347.43 308.0,347.28 308.5,347.13 309.0,346.99 309.5,346.84 310.0,346.70 310.5,346.55 311.0,346.41 311.5,346.27 312.0,346.12 312.5,345.98 313.0,345.84 313.5,345.70 314.0,345.56 314.5,345.42 315.0,345.28 315.5,345.14 316.0,345.01 316.5,344.87 317.0,344.73 317.5,344.60 318.0,344.46 318.5,344.32 319.0,344.19 319.5,344.05 320.0,343.92 320.5,343.79 321.0,343.65 321.5,343.52 322.0,343.39 322.5,343.26 323.0,343.13 323.5,343.00 324.0,342.87 324.5,342.74 325.0,342.61 325.5,342.48 326.0,342.35 326.5,342.23 327.0,342.10 327.5,341.97 328.0,341.85 328.5,341.72 329.0,341.60 329.5,341.47 330.0,341.35 330.5,341.23 331.0,341.10 331.5,340.98 332.0,340.86 332.5,340.74 333.0,340.62 333.5,340.50 334.0,340.38 334.5,340.26 335.0,340.14 335.5,340.02 336.0,339.90 336.5,339.78 337.0,339.66 337.5,339.55 338.0,339.43 338.5,339.32 339.0,339.20 339.5,339.08 340.0,338.97 340.5,338.86 341.0,338.74 341.5,338.63 342.0,338.52 342.5,338.40 343.0,338.29 343.5,338.18 344.0,338.07 344.5,337.96 345.0,337.85 345.5,337.74 346.0,337.63 346.5,337.52 347.0,337.41 347.5,337.30 348.0,337.19 348.5,337.09 349.0,336.98 349.5,336.87 350.0,336.77 350.5,336.66 351.0,336.55 351.5,336.45 352.0,336.34 352.5,336.24 353.0,336.14 353.5,336.03 354.0,335.93 354.5,335.83 355.0,335.73 355.5,335.62 356.0,335.52 356.5,335.42 357.0,335.32 357.5,335.22 358.0,335.12 358.5,335.02 359.0,334.92 359.5,334.82 360.0,334.72 360.5,334.63 361.0,334.53 361.5,334.43 362.0,334.34 362.5,334.24 363.0,334.14 363.5,334.05 364.0,333.95 364.5,333.86 365.0,333.76 365.5,333.67 366.0,333.57 366.5,333.48 367.0,333.39 367.5,333.29 368.0,333.20 368.5,333.11 369.0,333.02 369.5,332.93 370.0,332.83 370.5,332.74 371.0,332.65 371.5,332.56 372.0,332.47 372.5,332.38 373.0,332.30 373.5,332.21 374.0,332.12 374.5,332.03 375.0,331.94 375.5,331.86 376.0,331.77 376.5,331.68 377.0,331.60 377.5,331.51 378.0,331.42 378.5,331.34 379.0,331.25 379.5,331.17 380.0,331.09 380.5,331.00 381.0,330.92 381.5,330.83 382.0,330.75 382.5,330.67 383.0,330.59 383.5,330.50 384.0,330.42 384.5,330.34 385.0,330.26 385.5,330.18 386.0,330.10 386.5,330.02 387.0,329.94 387.5,329.86 388.0,329.78 388.5,329.70 389.0,329.62 389.5,329.54 390.0,329.46 390.5,329.39 391.0,329.31 391.5,329.23 392.0,329.16 392.5,329.08 393.0,329.00 393.5,328.93 394.0,328.85 394.5,328.78 395.0,328.70 395.5,328.63 396.0,328.55 396.5,328.48 397.0,328.40 397.5,328.33 398.0,328.26 398.5,328.18 399.0,328.11 399.5,328.04 400.0,327.96 400.5,327.89 401.0,327.82 401.5,327.75 402.0,327.68 402.5,327.61 403.0,327.54 403.5,327.47 404.0,327.40 404.5,327.33 405.0,327.26 405.5,327.19 406.0,327.12 406.5,327.05 407.0,326.98 407.5,326.91 408.0,326.84 408.5,326.78 409.0,326.71 409.5,326.64 410.0,326.58 410.5,326.51 411.0,326.44 411.5,326.38 412.0,326.31 412.5,326.24 413.0,326.18 413.5,326.11 414.0,326.05 414.5,325.98 415.0,325.92 415.5,325.86 416.0,325.79 416.5,325.73 417.0,325.66 417.5,325.60 418.0,325.54 418.5,325.48 419.0,325.41 419.5,325.35 420.0,325.29 420.5,325.23 421.0,325.17 421.5,325.10 422.0,325.04 422.5,324.98 423.0,324.92 423.5,324.86 424.0,324.80 424.5,324.74 425.0,324.68 425.5,324.62 426.0,324.56 426.5,324.50 427.0,324.45 427.5,324.39 428.0,324.33 428.5,324.27 429.0,324.21 429.5,324.15 430.0,324.10 430.5,324.04 431.0,323.98 431.5,323.93 432.0,323.87 432.5,323.81 433.0,323.76 433.5,323.70 434.0,323.65 434.5,323.59 435.0,323.54 435.5,323.48 436.0,323.43 436.5,323.37 437.0,323.32 437.5,323.26 438.0,323.21 438.5,323.15 439.0,323.10 439.5,323.05 440.0,322.99 440.5,322.94 441.0,322.89 441.5,322.84 442.0,322.78 442.5,322.73 443.0,322.68 443.5,322.63 444.0,322.58 444.5,322.53 445.0,322.47 445.5,322.42 446.0,322.37 446.5,322.32 447.0,322.27 447.5,322.22 448.0,322.17 448.5,322.12 449.0,322.07 449.5,322.02 450.0,321.97 450.5,321.92 451.0,321.88 451.5,321.83 452.0,321.78 452.5,321.73 453.0,321.68 453.5,321.63 454.0,321.59 454.5,321.54 455.0,321.49 455.5,321.44 456.0,321.40 456.5,321.35 457.0,321.30 457.5,321.26 458.0,321.21 458.5,321.16 459.0,321.12 459.5,321.07 460.0,321.03 460.5,320.98 461.0,320.94 461.5,320.89 462.0,320.85 462.5,320.80 463.0,320.76 463.5,320.71 464.0,320.67 464.5,320.62 465.0,320.58 465.5,320.54 466.0,320.49 466.5,320.45 467.0,320.41 467.5,320.36 468.0,320.32 468.5,320.28 469.0,320.24 469.5,320.19 470.0,320.15 470.5,320.11 471.0,320.07 471.5,320.03 472.0,319.98 472.5,319.94 473.0,319.90 473.5,319.86 474.0,319.82 474.5,319.78 475.0,319.74 475.5,319.70 476.0,319.66 476.5,319.62 477.0,319.58 477.5,319.54 478.0,319.50 478.5,319.46 479.0,319.42 479.5,319.38 480.0,319.34 480.5,319.30 481.0,319.26 481.5,319.22 482.0,319.19 482.5,319.15 483.0,319.11 483.5,319.07 484.0,319.03 484.5,319.00 485.0,318.96 485.5,318.92 486.0,318.88 486.5,318.85 487.0,318.81 487.5,318.77 488.0,318.74 488.5,318.70 489.0,318.66 489.5,318.63 490.0,318.59 490.5,318.55 491.0,318.52 491.5,318.48 492.0,318.45 492.5,318.41 493.0,318.38 493.5,318.34 494.0,318.31 494.5,318.27 495.0,318.24 495.5,318.20 496.0,318.17 496.5,318.13 497.0,318.10 497.5,318.06 498.0,318.03 498.5,318.00 499.0,317.96 499.5,317.93 500.0,317.89 500.5,317.86 501.0,317.83 501.5,317.80 502.0,317.76 502.5,317.73 503.0,317.70 503.5,317.66 504.0,317.63 504.5,317.60 505.0,317.57 505.5,317.53 506.0,317.50 506.5,317.47 507.0,317.44 507.5,317.41 508.0,317.38 508.5,317.34 509.0,317.31 509.5,317.28 510.0,317.25 510.5,317.22 511.0,317.19 511.5,317.16 512.0,317.13 512.5,317.10 513.0,317.07 513.5,317.04 514.0,317.01 514.5,316.98 515.0,316.95 515.5,316.92 516.0,316.89 516.5,316.86 517.0,316.83 517.5,316.80 518.0,316.77 518.5,316.74 519.0,316.71 519.5,316.68 520.0,316.65 520.5,316.63 521.0,316.60 521.5,316.57 522.0,316.54 522.5,316.51 523.0,316.48 523.5,316.46 524.0,316.43 524.5,316.40 525.0,316.37 525.5,316.35 526.0,316.32 526.5,316.29 527.0,316.26 527.5,316.24 528.0,316.21 528.5,316.18 529.0,316.16 529.5,316.13 530.0,316.10 530.5,316.08 531.0,316.05 531.5,316.02 532.0,316.00 532.5,315.97 533.0,315.95 533.5,315.92 534.0,315.89 534.5,315.87 535.0,315.84 535.5,315.82 536.0,315.79 536.5,315.77 537.0,315.74 537.5,315.72 538.0,315.69 538.5,315.67 539.0,315.64 539.5,315.62 540.0,315.59 540.5,315.57 541.0,315.54 541.5,315.52 542.0,315.49 542.5,315.47 543.0,315.45 543.5,315.42 544.0,315.40 544.5,315.37 545.0,315.35 545.5,315.33 546.0,315.30 546.5,315.28 547.0,315.26 547.5,315.23 548.0,315.21 548.5,315.19 549.0,315.16 549.5,315.14 550.0,315.12 550.5,315.10 551.0,315.07 551.5,315.05 552.0,315.03 552.5,315.01 553.0,314.98 553.5,314.96 554.0,314.94 554.5,314.92 555.0,314.90 555.5,314.87 556.0,314.85 556.5,314.83 557.0,314.81 557.5,314.79 558.0,314.77 558.5,314.74 559.0,314.72 559.5,314.70 560.0,314.68 560.5,314.66 561.0,314.64 561.5,314.62 562.0,314.60 562.5,314.58 563.0,314.56 563.5,314.53 564.0,314.51 564.5,314.49 565.0,314.47 565.5,314.45 566.0,314.43 566.5,314.41 567.0,314.39 567.5,314.37 568.0,314.35 568.5,314.33 569.0,314.31 569.5,314.29 570.0,314.27 570.5,314.26 571.0,314.24 571.5,314.22 572.0,314.20 572.5,314.18 573.0,314.16 573.5,314.14 574.0,314.12 574.5,314.10 575.0,314.08 575.5,314.06 576.0,314.05 576.5,314.03 577.0,314.01 577.5,313.99 578.0,313.97 578.5,313.95 579.0,313.94 579.5,313.92 580.0,313.90 580.5,313.88 581.0,313.86 581.5,313.85 582.0,313.83 582.5,313.81 583.0,313.79 583.5,313.77 584.0,313.76 584.5,313.74 585.0,313.72 585.5,313.70 586.0,313.69 586.5,313.67 587.0,313.65 587.5,313.64 588.0,313.62 588.5,313.60 589.0,313.58 589.5,313.57 590.0,313.55 590.5,313.53 591.0,313.52 591.5,313.50 592.0,313.48 592.5,313.47 593.0,313.45 593.5,313.44 594.0,313.42 594.5,313.40 595.0,313.39 595.5,313.37 596.0,313.35 596.5,313.34 597.0,313.32 597.5,313.31 598.0,313.29 598.5,313.28 599.0,313.26 599.5,313.24 600.0,313.23 600.5,313.21 601.0,313.20 601.5,313.18 602.0,313.17 602.5,313.15 603.0,313.14 603.5,313.12 604.0,313.11 604.5,313.09 605.0,313.08 605.5,313.06 606.0,313.05 606.5,313.03 607.0,313.02 607.5,313.00 608.0,312.99 608.5,312.97 609.0,312.96 609.5,312.94 610.0,312.93 610.5,312.92 611.0,312.90 611.5,312.89 612.0,312.87 612.5,312.86 613.0,312.85 613.5,312.83 614.0,312.82 614.5,312.80 615.0,312.79 615.5,312.78 616.0,312.76 616.5,312.75 617.0,312.74 617.5,312.72 618.0,312.71 618.5,312.69 619.0,312.68 619.5,312.67 620.0,312.65 620.5,312.64 621.0,312.63 621.5,312.61 622.0,312.60 622.5,312.59 623.0,312.58 623.5,312.56 624.0,312.55 624.5,312.54 625.0,312.52 625.5,312.51 626.0,312.50 626.5,312.49 627.0,312.47 627.5,312.46 628.0,312.45 628.5,312.44 629.0,312.42 629.5,312.41 630.0,312.40 630.5,312.39 631.0,312.37 631.5,312.36 632.0,312.35 632.5,312.34 633.0,312.33 633.5,312.31 634.0,312.30 634.5,312.29 635.0,312.28 635.5,312.27 636.0,312.25 636.5,312.24 637.0,312.23 637.5,312.22 638.0,312.21 638.5,312.20 639.0,312.18 639.5,312.17 640.0,312.16 640.5,312.15 641.0,312.14 641.5,312.13 642.0,312.12 642.5,312.11 643.0,312.09 643.5,312.08 644.0,312.07 644.5,312.06 645.0,312.05 645.5,312.04 646.0,312.03 646.5,312.02 647.0,312.01 647.5,312.00 648.0,311.99 648.5,311.97 649.0,311.96 649.5,311.95 650.0,311.94 650.5,311.93 651.0,311.92 651.5,311.91 652.0,311.90 652.5,311.89 653.0,311.88 653.5,311.87 654.0,311.86 654.5,311.85 655.0,311.84 655.5,311.83 656.0,311.82 656.5,311.81 657.0,311.80 657.5,311.79 658.0,311.78 658.5,311.77 659.0,311.76 659.5,311.75 660.0,311.74 660.5,311.73 661.0,311.72 661.5,311.71 662.0,311.70 662.5,311.69 663.0,311.68 663.5,311.67 664.0,311.66 664.5,311.65 665.0,311.64 665.5,311.63 666.0,311.62 666.5,311.62 667.0,311.61 667.5,311.60 668.0,311.59 668.5,311.58 669.0,311.57 669.5,311.56 670.0,311.55 670.5,311.54 671.0,311.53 671.5,311.52 672.0,311.52 672.5,311.51 673.0,311.50 673.5,311.49 674.0,311.48 674.5,311.47 675.0,311.46 675.5,311.45 676.0,311.45 676.5,311.44 677.0,311.43 677.5,311.42 678.0,311.41 678.5,311.40 679.0,311.39 679.5,311.39 680.0,311.38 680.5,311.37 681.0,311.36 681.5,311.35 682.0,311.34 682.5,311.34 683.0,311.33 683.5,311.32 684.0,311.31 684.5,311.30 685.0,311.30 685.5,311.29 686.0,311.28 686.5,311.27 687.0,311.26 687.5,311.26 688.0,311.25 688.5,311.24 689.0,311.23 689.5,311.22 690.0,311.22 690.5,311.21 691.0,311.20 691.5,311.19 692.0,311.19 692.5,311.18 693.0,311.17 693.5,311.16 694.0,311.16 694.5,311.15 695.0,311.14 695.5,311.13 696.0,311.13 696.5,311.12 697.0,311.11 697.5,311.10 698.0,311.10 698.5,311.09 699.0,311.08 699.5,311.07 700.0,311.07 700.5,311.06 701.0,311.05 701.5,311.05 702.0,311.04 702.5,311.03 703.0,311.02 703.5,311.02 704.0,311.01 704.5,311.00 705.0,311.00 705.5,310.99 706.0,310.98 706.5,310.98 707.0,310.97 707.5,310.96 708.0,310.96 708.5,310.95 709.0,310.94 709.5,310.94 710.0,310.93 710.5,310.92 711.0,310.92 711.5,310.91 712.0,310.90 712.5,310.90 713.0,310.89 713.5,310.88 714.0,310.88 714.5,310.87 715.0,310.86 715.5,310.86 716.0,310.85 716.5,310.84 717.0,310.84 717.5,310.83 718.0,310.83 718.5,310.82 719.0,310.81 719.5,310.81 720.0,310.80 720.5,310.79 721.0,310.79 721.5,310.78 722.0,310.78 722.5,310.77 723.0,310.76 723.5,310.76 724.0,310.75 724.5,310.75 725.0,310.74 725.5,310.73 726.0,310.73 726.5,310.72 727.0,310.72 727.5,310.71 728.0,310.71 728.5,310.70 729.0,310.69 729.5,310.69 730.0,310.68 730.5,310.68 731.0,310.67 731.5,310.67 732.0,310.66 732.5,310.65 733.0,310.65 733.5,310.64 734.0,310.64 734.5,310.63 735.0,310.63 735.5,310.62 736.0,310.62 736.5,310.61 737.0,310.60 737.5,310.60 738.0,310.59 738.5,310.59 739.0,310.58 739.5,310.58 740.0,310.57 740.5,310.57 741.0,310.56 741.5,310.56 742.0,310.55 742.5,310.55 743.0,310.54 743.5,310.54 744.0,310.53 744.5,310.53 745.0,310.52 745.5,310.52 746.0,310.51 746.5,310.51 747.0,310.50 747.5,310.50 748.0,310.49 748.5,310.49 749.0,310.48 749.5,310.48 750.0,310.47 750.5,310.47 751.0,310.46 751.5,310.46 752.0,310.45 752.5,310.45 753.0,310.44 753.5,310.44 754.0,310.43 754.5,310.43 755.0,310.42 755.5,310.42 756.0,310.41 756.5,310.41 757.0,310.40 757.5,310.40 758.0,310.39 758.5,310.39 759.0,310.39 759.5,310.38 760.0,310.38 760.5,310.37 761.0,310.37 761.5,310.36 762.0,310.36 762.5,310.35 763.0,310.35 763.5,310.35 764.0,310.34 764.5,310.34 765.0,310.33 765.5,310.33 766.0,310.32 766.5,310.32 767.0,310.32 767.5,310.31 768.0,310.31 768.5,310.30 769.0,310.30 769.5,310.29 770.0,310.29 770.5,310.29 771.0,310.28 771.5,310.28 772.0,310.27 772.5,310.27 773.0,310.26 773.5,310.26 774.0,310.26 774.5,310.25 775.0,310.25 775.5,310.24 776.0,310.24 776.5,310.24 777.0,310.23 777.5,310.23 778.0,310.22 778.5,310.22 779.0,310.22 779.5,310.21 780.0,310.21 780.5,310.21 781.0,310.20 781.5,310.20 782.0,310.19 782.5,310.19 783.0,310.19 783.5,310.18 784.0,310.18 784.5,310.17 785.0,310.17 785.5,310.17 786.0,310.16 786.5,310.16 787.0,310.16 787.5,310.15 788.0,310.15 788.5,310.15 789.0,310.14 789.5,310.14 790.0,310.13 790.5,310.13 791.0,310.13 791.5,310.12 792.0,310.12 792.5,310.12 793.0,310.11 793.5,310.11 794.0,310.11 794.5,310.10 795.0,310.10 795.5,310.10 796.0,310.09 796.5,310.09 797.0,310.09 797.5,310.08 798.0,310.08 798.5,310.08 799.0,310.07 799.5,310.07 800.0,310.07 800.5,310.06 801.0,310.06 801.5,310.06 802.0,310.05 802.5,310.05 803.0,310.05 803.5,310.04 804.0,310.04 804.5,310.04 805.0,310.03 805.5,310.03 806.0,310.03 806.5,310.02 807.0,310.02 807.5,310.02 808.0,310.01 808.5,310.01 809.0,310.01 809.5,310.00 810.0,310.00 810.5,310.00 811.0,309.99 811.5,309.99 812.0,309.99 812.5,309.99 813.0,309.98 813.5,309.98 814.0,309.98 814.5,309.97 815.0,309.97 815.5,309.97 816.0,309.96 816.5,309.96 817.0,309.96 817.5,309.96 818.0,309.95 818.5,309.95 819.0,309.95 819.5,309.94 820.0,309.94 820.5,309.94 821.0,309.94 821.5,309.93 822.0,309.93 822.5,309.93 823.0,309.92 823.5,309.92 824.0,309.92 824.5,309.92 825.0,309.91 825.5,309.91 826.0,309.91 826.5,309.91 827.0,309.90 827.5,309.90 828.0,309.90 828.5,309.89 829.0,309.89 829.5,309.89 830.0,309.89 830.5,309.88 831.0,309.88 831.5,309.88 832.0,309.88 832.5,309.87 833.0,309.87 833.5,309.87 834.0,309.87 834.5,309.86 835.0,309.86 835.5,309.86 836.0,309.86 836.5,309.85 837.0,309.85 837.5,309.85 838.0,309.85 838.5,309.84 839.0,309.84 839.5,309.84 840.0,309.84 840.5,309.83 841.0,309.83 841.5,309.83 842.0,309.83 842.5,309.82 843.0,309.82 843.5,309.82 844.0,309.82 844.5,309.81 845.0,309.81 845.5,309.81 846.0,309.81 846.5,309.80 847.0,309.80 847.5,309.80 848.0,309.80 848.5,309.80 849.0,309.79 849.5,309.79 850.0,309.79 850.5,309.79 851.0,309.78 851.5,309.78 852.0,309.78 852.5,309.78 853.0,309.78 853.5,309.77 854.0,309.77 854.5,309.77 855.0,309.77 855.5,309.76 856.0,309.76 856.5,309.76 857.0,309.76 857.5,309.76 858.0,309.75 858.5,309.75 859.0,309.75 859.5,309.75 860.0,309.75 860.5,309.74 861.0,309.74 861.5,309.74 862.0,309.74 862.5,309.73 863.0,309.73 863.5,309.73 864.0,309.73 864.5,309.73 865.0,309.72 865.5,309.72 866.0,309.72 866.5,309.72 867.0,309.72 867.5,309.71 868.0,309.71 868.5,309.71 869.0,309.71 869.5,309.71 870.0,309.70 870.5,309.70 871.0,309.70 871.5,309.70 872.0,309.70 872.5,309.70 873.0,309.69 873.5,309.69 874.0,309.69 874.5,309.69 875.0,309.69 875.5,309.68 876.0,309.68 876.5,309.68 877.0,309.68 877.5,309.68 878.0,309.67 878.5,309.67 879.0,309.67 879.5,309.67 880.0,309.67 880.5,309.67 881.0,309.66 881.5,309.66 882.0,309.66 882.5,309.66 883.0,309.66 883.5,309.66 884.0,309.65 884.5,309.65 885.0,309.65 885.5,309.65 886.0,309.65 886.5,309.64 887.0,309.64 887.5,309.64 888.0,309.64" fill="none" stroke="#eeee55" stroke-width="1.1"/>
<line x1="55.5" y1="486.4" x2="88" y2="486.4" stroke="#a8a830" stroke-width="1.4"/>
</g>
<g opacity="0.75">
<line x1="55.5" y1="304.6" x2="888.2" y2="304.6" stroke="#a01818" stroke-width="1.1"/>
<line x1="55.5" y1="312.9" x2="888.2" y2="312.9" stroke="#a01818" stroke-width="1.1"/>
<line x1="55.5" y1="450.2" x2="888.2" y2="450.2" stroke="#b02020" stroke-width="1.2"/>
<line x1="138.2" y1="131.1" x2="138.2" y2="487.1" stroke="#c03030" stroke-width="1.2"/>
</g>
<rect x="264.00" y="306.00" width="88.00" height="12.50" fill="#000" />
<text x="266.80" y="316.50" font-size="9.5" fill="#a81616" textLength="82.1" lengthAdjust="spacingAndGlyphs" >2.999000000 GHz</text>
<rect x="368.00" y="298.00" width="89.20" height="10.20" fill="#000" />
<text x="371.30" y="307.70" font-size="9.5" fill="#a81616" textLength="82.2" lengthAdjust="spacingAndGlyphs" >3.001000000 GHz</text>
<rect x="157.50" y="444.00" width="109.40" height="12.00" fill="#000" />
<text x="160.60" y="453.00" font-size="9.5" fill="#a81616" textLength="103.1" lengthAdjust="spacingAndGlyphs" >TRG 2.968387097 GHz</text>
<rect x="127.80" y="464.50" width="21.20" height="22.50" fill="#000" />
<text x="129.40" y="475.30" font-size="9.5" fill="#c02020" textLength="17.9" lengthAdjust="spacingAndGlyphs" >TRG</text>
<text x="592.80" y="302.10" font-size="9.5" fill="#3cc4ad" textLength="10.4" lengthAdjust="spacingAndGlyphs" >ST</text>
<polygon points="594.3,306.7 601.3,306.7 597.8,311" fill="none" stroke="#3cc4ad" stroke-width="1.2"/>
<text x="59.90" y="498.10" font-size="12" fill="#e8e8e8" textLength="122.2" lengthAdjust="spacingAndGlyphs" >-992.234685073 ns</text>
<text x="885.00" y="498.10" font-size="12" fill="#e8e8e8" text-anchor="end" textLength="103.0" lengthAdjust="spacingAndGlyphs" >9.007765315 µs</text>
<rect x="52.00" y="502.30" width="838.00" height="16.20" fill="#2c3033" />
<rect x="52.00" y="518.50" width="838.00" height="1.60" fill="#1c2024" />
<text x="56.40" y="516.20" font-size="12" fill="#e4e4e4" textLength="94.9" lengthAdjust="spacingAndGlyphs" >2 Marker Table</text>
<rect x="447.30" y="497.40" width="48.40" height="11.40" fill="#4f5659" />
<line x1="449.5" y1="503.6" x2="493" y2="503.6" stroke="#9aa0a3" stroke-width="0.8" stroke-dasharray="1,3"/>
<rect x="447.30" y="500.20" width="48.40" height="1.50" fill="#3a4cb4" />
<text x="448.80" y="498.10" font-size="12" fill="#e8e8e8" textLength="44.0" lengthAdjust="spacingAndGlyphs" >1.0 µs/</text>
<rect x="55.50" y="520.10" width="832.00" height="14.00" fill="#35495a" />
<line x1="138.1" y1="520.1" x2="138.1" y2="534.1" stroke="#27353f" stroke-width="1"/>
<line x1="221.6" y1="520.1" x2="221.6" y2="534.1" stroke="#27353f" stroke-width="1"/>
<line x1="303.8" y1="520.1" x2="303.8" y2="534.1" stroke="#27353f" stroke-width="1"/>
<line x1="594.9" y1="520.1" x2="594.9" y2="534.1" stroke="#27353f" stroke-width="1"/>
<text x="97.70" y="531.10" font-size="12" fill="#e6e6e6" text-anchor="middle" textLength="29.8" lengthAdjust="spacingAndGlyphs" >Type</text>
<text x="179.90" y="531.10" font-size="12" fill="#e6e6e6" text-anchor="middle" textLength="22.0" lengthAdjust="spacingAndGlyphs" >Ref</text>
<text x="262.80" y="531.10" font-size="12" fill="#e6e6e6" text-anchor="middle" textLength="35.6" lengthAdjust="spacingAndGlyphs" >Trace</text>
<text x="449.20" y="531.10" font-size="12" fill="#e6e6e6" text-anchor="middle" textLength="47.3" lengthAdjust="spacingAndGlyphs" >X-value</text>
<text x="741.00" y="531.10" font-size="12" fill="#e6e6e6" text-anchor="middle" textLength="47.0" lengthAdjust="spacingAndGlyphs" >Y-value</text>
<rect x="52.00" y="534.10" width="838.00" height="14.50" fill="#000" />
<text x="96.40" y="544.30" font-size="11" fill="#d8d8d8" text-anchor="middle" textLength="13.2" lengthAdjust="spacingAndGlyphs" >ST</text>
<text x="261.90" y="544.30" font-size="11" fill="#d8d8d8" text-anchor="middle" >1</text>
<text x="445.60" y="544.30" font-size="11" fill="#d8d8d8" text-anchor="middle" textLength="36.4" lengthAdjust="spacingAndGlyphs" >5.5 µs</text>
<text x="736.50" y="544.30" font-size="11" fill="#d8d8d8" text-anchor="middle" textLength="104.2" lengthAdjust="spacingAndGlyphs" >2.998992432 GHz</text>
<rect x="52.00" y="549.00" width="920.00" height="27.00" fill="#1f282d" />
<rect x="52.70" y="549.80" width="108.30" height="24.40" fill="#2a363d" />
<rect x="165.00" y="549.80" width="482.60" height="24.40" fill="#2a363d" />
<polygon points="152.3,562.5 158.2,562.5 155.25,565" fill="#8a9399"/>
<polygon points="638.5,562.5 644.4,562.5 641.45,565" fill="#8a9399"/>
<text x="723.80" y="565.80" font-size="9.6" fill="#e8e8e8" font-weight="bold" text-anchor="middle" textLength="53.4" lengthAdjust="spacingAndGlyphs" >Measuring</text>
<rect x="839.80" y="553.20" width="33.40" height="19.60" fill="none" stroke="#8b9095" stroke-width="1.5"/>
<text x="856.50" y="567.00" font-size="11" fill="#8b9095" font-weight="bold" text-anchor="middle" textLength="16.5" lengthAdjust="spacingAndGlyphs" >DC</text>
<g fill="#26b02a"><rect x="885" y="556.5" width="4.5" height="3"/><rect x="879.5" y="563" width="4.5" height="3.2"/><rect x="890" y="563" width="4.5" height="3.2"/><rect x="886.8" y="559" width="1" height="3"/><rect x="881.5" y="561.5" width="11" height="1"/></g>
<text x="964.50" y="562.00" font-size="10.5" fill="#e6e6e6" font-weight="bold" text-anchor="end" textLength="57.0" lengthAdjust="spacingAndGlyphs" >2022-07-28</text>
<text x="964.50" y="572.80" font-size="10.5" fill="#e6e6e6" font-weight="bold" text-anchor="end" textLength="45.0" lengthAdjust="spacingAndGlyphs" >11:29:04</text>
<text x="930.70" y="20.80" font-size="10" fill="#f0f0f0" font-weight="bold" text-anchor="middle" textLength="36.8" lengthAdjust="spacingAndGlyphs" >Trigger</text>
<rect x="892.50" y="35.00" width="79.30" height="44.60" fill="#4c6070" />
<text x="932.00" y="58.75" font-size="10" fill="#f0f0f0" font-weight="bold" text-anchor="middle" textLength="45.3" lengthAdjust="spacingAndGlyphs" >Free Run</text>
<rect x="892.50" y="82.40" width="79.30" height="45.00" fill="#4c6070" />
<text x="932.30" y="99.00" font-size="10" fill="#f0f0f0" font-weight="bold" text-anchor="middle" textLength="43.0" lengthAdjust="spacingAndGlyphs" >External</text>
<text x="931.80" y="112.20" font-size="10" fill="#f0f0f0" font-weight="bold" text-anchor="middle" textLength="44.0" lengthAdjust="spacingAndGlyphs" >Trigger 1</text>
<rect x="892.50" y="130.40" width="79.30" height="44.20" fill="#f27f0f" />
<text x="931.90" y="153.40" font-size="10" fill="#fbeede" font-weight="bold" text-anchor="middle" textLength="54.7" lengthAdjust="spacingAndGlyphs" >Frequency</text>
<rect x="892.50" y="177.70" width="79.30" height="44.50" fill="#4c6070" />
<text x="932.30" y="201.10" font-size="10" fill="#6f7e8b" font-weight="bold" text-anchor="middle" textLength="53.9" lengthAdjust="spacingAndGlyphs" >I/Q Power</text>
<rect x="892.50" y="367.60" width="79.30" height="44.00" fill="#1e98f0" />
<text x="932.40" y="384.10" font-size="10" fill="#f0f6ff" font-weight="bold" text-anchor="middle" textLength="35.6" lengthAdjust="spacingAndGlyphs" >Trigger</text>
<text x="931.80" y="396.60" font-size="10" fill="#f0f6ff" font-weight="bold" text-anchor="middle" textLength="30.9" lengthAdjust="spacingAndGlyphs" >Offset</text>
<rect x="892.50" y="414.60" width="79.30" height="45.00" fill="#4c6070" />
<text x="937.60" y="431.80" font-size="10" fill="#f0f0f0" font-weight="bold" text-anchor="middle" textLength="35.6" lengthAdjust="spacingAndGlyphs" >Trigger</text>
<text x="937.90" y="444.00" font-size="10" fill="#f0f0f0" font-weight="bold" text-anchor="middle" textLength="32.7" lengthAdjust="spacingAndGlyphs" >Config</text>
<polygon points="898.8,436.2 901.6,434 901.6,438.4" fill="#dde"/><rect x="903.8" y="430" width="1" height="14" fill="#c8cdd2"/>
<rect x="892.50" y="478.00" width="79.30" height="62.00" fill="#4c6070" />
<g fill="#e6e6ec"><rect x="901.7" y="488.4" width="14.6" height="10.3"/><rect x="929.7" y="488.4" width="9.7" height="10.3"/><rect x="917" y="507.8" width="10.9" height="9.8"/><rect x="951.6" y="488.4" width="10.9" height="29.2"/><polygon points="923.5,491 927,493.5 923.5,496"/><polygon points="946.5,491 950,493.5 946.5,496"/><polygon points="913,509.5 916.5,512 913,514.5"/><polygon points="946.5,504.5 950,507 946.5,509.5"/></g><path d="M917.5,493.5 H924 M940.6,493.5 H947 M934.5,498.7 V503.2 H902.7 V512 H913.5 M928,512 C936,512 938,507 947,507" fill="none" stroke="#e6e6ec" stroke-width="1.2"/><g fill="#5a6068"><rect x="953.2" y="490.7" width="7.7" height="1.2"/><rect x="953.2" y="494.0" width="7.7" height="1.2"/><rect x="953.2" y="497.3" width="7.7" height="1.2"/><rect x="953.2" y="500.6" width="7.7" height="1.2"/><rect x="953.2" y="503.9" width="7.7" height="1.2"/><rect x="953.2" y="507.2" width="7.7" height="1.2"/><rect x="953.2" y="510.5" width="7.7" height="1.2"/><rect x="953.2" y="513.8" width="7.7" height="1.2"/></g>
<text x="931.80" y="531.50" font-size="10" fill="#e8eef4" font-weight="bold" text-anchor="middle" textLength="48.0" lengthAdjust="spacingAndGlyphs" >Overview</text>
</svg></body></html>
